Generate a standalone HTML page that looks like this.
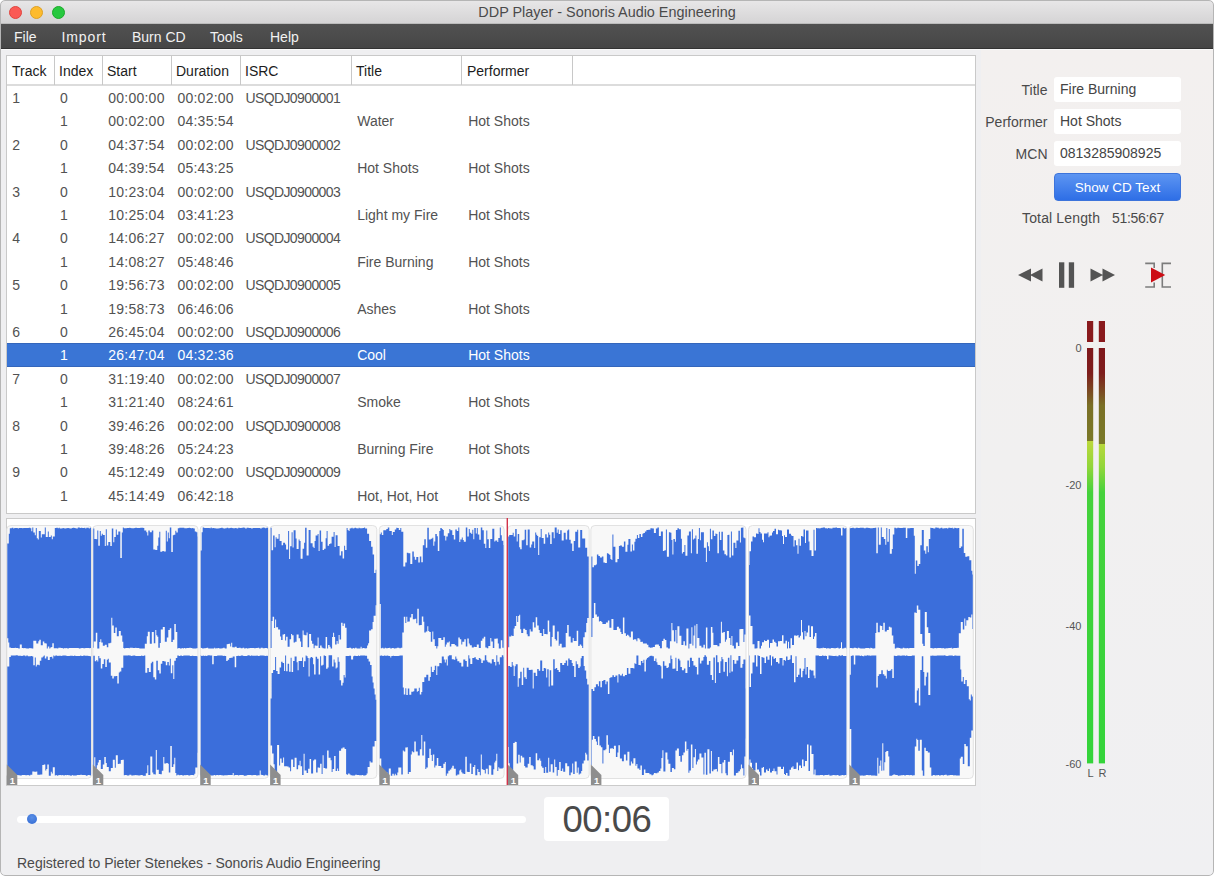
<!DOCTYPE html>
<html><head><meta charset="utf-8">
<style>
*{box-sizing:border-box;margin:0;padding:0}
html,body{width:1214px;height:876px;overflow:hidden;background:#fff;font-family:"Liberation Sans",sans-serif}
.win{position:absolute;left:0;top:0;width:1214px;height:876px;background:#efeff1;border-radius:5px;overflow:hidden}
.frame{position:absolute;left:0;top:0;width:1214px;height:876px;border:1px solid #b5b5b5;border-radius:5px;pointer-events:none}
.wave{position:absolute;left:6px;top:518px;width:970px;height:268px;background:#fff;border:1px solid #cbcbcb}
.abs{position:absolute;white-space:nowrap}
.titlebar{position:absolute;left:0;top:0;width:1214px;height:24px;background:linear-gradient(#e8e7e8,#d5d4d5);border-bottom:1px solid #bcbcbc}
.tl{position:absolute;top:5.5px;width:13px;height:13px;border-radius:50%}
.title{position:absolute;left:0;width:1214px;top:4px;text-align:center;font-size:14.4px;color:#4a4a4a}
.menubar{position:absolute;left:0;top:24px;width:1214px;height:25px;background:linear-gradient(#515151,#464646);border-bottom:1px solid #333}
.menu{position:absolute;top:4.5px;font-size:14px;color:#f2f2f2}
.table{position:absolute;left:6px;top:55px;width:970px;height:459px;background:#fff;border:1px solid #c9c9c9}
.hdr{position:absolute;left:0;top:0;width:968px;height:30px;border-bottom:2px solid #dcdcdc}
.hsep{position:absolute;top:0;width:1px;height:29px;background:#c8c8c8}
.ht{position:absolute;top:7px;font-size:14px;color:#1c1c1c}
.row{position:absolute;left:0;width:968px;height:23.4px}
.row span{position:absolute;top:4px;font-size:14px;color:#525252}
.row.sel{background:#3a75d5;box-shadow:inset 0 1px #3466bb,inset 0 -1px #3466bb}
.row.sel span{color:#fff}
.lbl{position:absolute;font-size:14px;color:#4a4a4a;text-align:right}
.fld{position:absolute;left:1054px;width:127px;height:25px;background:#fff;border-radius:3px}
.fld span{position:absolute;left:6px;top:4px;font-size:14px;color:#444}
.rpanel{position:absolute;left:981px;top:50px;width:233px;height:826px;background:linear-gradient(#f3f0ef,#f1f0f0 50%,#f0f0f2)}
.btn{position:absolute;left:1054px;top:173px;width:127px;height:28px;border-radius:4px;background:linear-gradient(#5d95f2,#2e6ee6);color:#fff;font-size:13.5px;text-align:center;line-height:28px;border:1px solid #3d74db}
</style></head><body>
<div class="win">
  <div class="titlebar">
    <div class="tl" style="left:9px;background:#fb5a55;border:1px solid #e0443e"></div>
    <div class="tl" style="left:30px;background:#fdbb2d;border:1px solid #dea123"></div>
    <div class="tl" style="left:51.5px;background:#27c83f;border:1px solid #1aab29"></div>
    <div class="title">DDP Player - Sonoris Audio Engineering</div>
  </div>
  <div class="menubar">
    <span class="menu" style="left:14px">File</span>
    <span class="menu" style="left:61.5px;letter-spacing:0.9px">Import</span>
    <span class="menu" style="left:132px">Burn CD</span>
    <span class="menu" style="left:210px">Tools</span>
    <span class="menu" style="left:270px">Help</span>
  </div>
  <div style="position:absolute;left:0;top:49px;width:1214px;height:1px;background:#f9f9f9"></div>
  <!--TABLE-->
<div class="table">
<div class="hdr">
<div class="hsep" style="left:47px"></div>
<div class="hsep" style="left:95px"></div>
<div class="hsep" style="left:164px"></div>
<div class="hsep" style="left:233px"></div>
<div class="hsep" style="left:344px"></div>
<div class="hsep" style="left:454px"></div>
<div class="hsep" style="left:565px"></div>
<span class="ht" style="left:5px">Track</span>
<span class="ht" style="left:52px">Index</span>
<span class="ht" style="left:100px">Start</span>
<span class="ht" style="left:169px">Duration</span>
<span class="ht" style="left:238px">ISRC</span>
<span class="ht" style="left:349px">Title</span>
<span class="ht" style="left:460px">Performer</span>
</div>
<div class="row" style="top:30.0px"><span style="left:5.3px">1</span><span style="left:53.0px">0</span><span style="left:101.2px;letter-spacing:0.25px">00:00:00</span><span style="left:170.4px;letter-spacing:0.25px">00:02:00</span><span style="left:238.4px;letter-spacing:-0.6px">USQDJ0900001</span></div>
<div class="row" style="top:53.4px"><span style="left:53.0px">1</span><span style="left:101.2px;letter-spacing:0.25px">00:02:00</span><span style="left:170.4px;letter-spacing:0.25px">04:35:54</span><span style="left:350.2px">Water</span><span style="left:461.2px">Hot Shots</span></div>
<div class="row" style="top:76.8px"><span style="left:5.3px">2</span><span style="left:53.0px">0</span><span style="left:101.2px;letter-spacing:0.25px">04:37:54</span><span style="left:170.4px;letter-spacing:0.25px">00:02:00</span><span style="left:238.4px;letter-spacing:-0.6px">USQDJ0900002</span></div>
<div class="row" style="top:100.2px"><span style="left:53.0px">1</span><span style="left:101.2px;letter-spacing:0.25px">04:39:54</span><span style="left:170.4px;letter-spacing:0.25px">05:43:25</span><span style="left:350.2px">Hot Shots</span><span style="left:461.2px">Hot Shots</span></div>
<div class="row" style="top:123.6px"><span style="left:5.3px">3</span><span style="left:53.0px">0</span><span style="left:101.2px;letter-spacing:0.25px">10:23:04</span><span style="left:170.4px;letter-spacing:0.25px">00:02:00</span><span style="left:238.4px;letter-spacing:-0.6px">USQDJ0900003</span></div>
<div class="row" style="top:147.0px"><span style="left:53.0px">1</span><span style="left:101.2px;letter-spacing:0.25px">10:25:04</span><span style="left:170.4px;letter-spacing:0.25px">03:41:23</span><span style="left:350.2px">Light my Fire</span><span style="left:461.2px">Hot Shots</span></div>
<div class="row" style="top:170.4px"><span style="left:5.3px">4</span><span style="left:53.0px">0</span><span style="left:101.2px;letter-spacing:0.25px">14:06:27</span><span style="left:170.4px;letter-spacing:0.25px">00:02:00</span><span style="left:238.4px;letter-spacing:-0.6px">USQDJ0900004</span></div>
<div class="row" style="top:193.8px"><span style="left:53.0px">1</span><span style="left:101.2px;letter-spacing:0.25px">14:08:27</span><span style="left:170.4px;letter-spacing:0.25px">05:48:46</span><span style="left:350.2px">Fire Burning</span><span style="left:461.2px">Hot Shots</span></div>
<div class="row" style="top:217.2px"><span style="left:5.3px">5</span><span style="left:53.0px">0</span><span style="left:101.2px;letter-spacing:0.25px">19:56:73</span><span style="left:170.4px;letter-spacing:0.25px">00:02:00</span><span style="left:238.4px;letter-spacing:-0.6px">USQDJ0900005</span></div>
<div class="row" style="top:240.6px"><span style="left:53.0px">1</span><span style="left:101.2px;letter-spacing:0.25px">19:58:73</span><span style="left:170.4px;letter-spacing:0.25px">06:46:06</span><span style="left:350.2px">Ashes</span><span style="left:461.2px">Hot Shots</span></div>
<div class="row" style="top:264.0px"><span style="left:5.3px">6</span><span style="left:53.0px">0</span><span style="left:101.2px;letter-spacing:0.25px">26:45:04</span><span style="left:170.4px;letter-spacing:0.25px">00:02:00</span><span style="left:238.4px;letter-spacing:-0.6px">USQDJ0900006</span></div>
<div class="row sel" style="top:287.4px"><span style="left:53.0px">1</span><span style="left:101.2px;letter-spacing:0.25px">26:47:04</span><span style="left:170.4px;letter-spacing:0.25px">04:32:36</span><span style="left:350.2px">Cool</span><span style="left:461.2px">Hot Shots</span></div>
<div class="row" style="top:310.8px"><span style="left:5.3px">7</span><span style="left:53.0px">0</span><span style="left:101.2px;letter-spacing:0.25px">31:19:40</span><span style="left:170.4px;letter-spacing:0.25px">00:02:00</span><span style="left:238.4px;letter-spacing:-0.6px">USQDJ0900007</span></div>
<div class="row" style="top:334.2px"><span style="left:53.0px">1</span><span style="left:101.2px;letter-spacing:0.25px">31:21:40</span><span style="left:170.4px;letter-spacing:0.25px">08:24:61</span><span style="left:350.2px">Smoke</span><span style="left:461.2px">Hot Shots</span></div>
<div class="row" style="top:357.6px"><span style="left:5.3px">8</span><span style="left:53.0px">0</span><span style="left:101.2px;letter-spacing:0.25px">39:46:26</span><span style="left:170.4px;letter-spacing:0.25px">00:02:00</span><span style="left:238.4px;letter-spacing:-0.6px">USQDJ0900008</span></div>
<div class="row" style="top:381.0px"><span style="left:53.0px">1</span><span style="left:101.2px;letter-spacing:0.25px">39:48:26</span><span style="left:170.4px;letter-spacing:0.25px">05:24:23</span><span style="left:350.2px">Burning Fire</span><span style="left:461.2px">Hot Shots</span></div>
<div class="row" style="top:404.4px"><span style="left:5.3px">9</span><span style="left:53.0px">0</span><span style="left:101.2px;letter-spacing:0.25px">45:12:49</span><span style="left:170.4px;letter-spacing:0.25px">00:02:00</span><span style="left:238.4px;letter-spacing:-0.6px">USQDJ0900009</span></div>
<div class="row" style="top:427.8px"><span style="left:53.0px">1</span><span style="left:101.2px;letter-spacing:0.25px">45:14:49</span><span style="left:170.4px;letter-spacing:0.25px">06:42:18</span><span style="left:350.2px">Hot, Hot, Hot</span><span style="left:461.2px">Hot Shots</span></div>
</div>
  <!--WAVE-->
<div class="wave"></div>
<svg class="abs" style="left:0;top:0" width="1212" height="876" viewBox="0 0 1212 876">
<rect x="6.8" y="525.5" width="84.7" height="253" rx="4" fill="#f8f8f8" stroke="#e2e2e2" stroke-width="1"/>
<rect x="92.8" y="525.5" width="105.2" height="253" rx="4" fill="#f8f8f8" stroke="#e2e2e2" stroke-width="1"/>
<rect x="200.2" y="525.5" width="68.3" height="253" rx="4" fill="#f8f8f8" stroke="#e2e2e2" stroke-width="1"/>
<rect x="270.1" y="525.5" width="106.7" height="253" rx="4" fill="#f8f8f8" stroke="#e2e2e2" stroke-width="1"/>
<rect x="379.3" y="525.5" width="124.8" height="253" rx="4" fill="#f8f8f8" stroke="#e2e2e2" stroke-width="1"/>
<rect x="507.7" y="525.5" width="81.5" height="253" rx="4" fill="#f8f8f8" stroke="#e2e2e2" stroke-width="1"/>
<rect x="590.9" y="525.5" width="155.1" height="253" rx="4" fill="#f8f8f8" stroke="#e2e2e2" stroke-width="1"/>
<rect x="748.5" y="525.5" width="98.4" height="253" rx="4" fill="#f8f8f8" stroke="#e2e2e2" stroke-width="1"/>
<rect x="849.3" y="525.5" width="124.0" height="253" rx="4" fill="#f8f8f8" stroke="#e2e2e2" stroke-width="1"/>
<path fill="#3b6edb" d="M7.3 543.4H7.8V543.4H8.3V543.4H8.8V533.7H9.3V533.7H9.8V528.3H10.3V528.3H10.8V528.3H11.3V528.3H11.8V527.8H12.3V527.8H12.8V527.8H13.3V528.4H13.8V528.4H14.3V528.0H14.8V528.0H15.3V528.0H15.8V527.9H16.3V527.9H16.8V527.9H17.3V527.9H17.8V528.5H18.3V528.5H18.8V528.0H19.3V528.0H19.8V528.0H20.3V528.1H20.8V528.1H21.3V528.1H21.8V528.1H22.3V528.3H22.8V528.3H23.3V527.9H23.8V527.9H24.3V527.9H24.8V528.1H25.3V528.1H25.8V527.9H26.3V527.9H26.8V528.0H27.3V528.0H27.8V528.0H28.3V528.0H28.8V527.8H29.3V527.8H29.8V527.8H30.3V528.2H30.8V528.2H31.3V531.2H31.8V531.2H32.3V527.6H32.8V527.6H33.3V532.5H33.8V532.5H34.3V532.5H34.8V535.3H35.3V535.3H35.8V528.0H36.3V528.0H36.8V538.2H37.3V538.2H37.8V539.5H38.3V539.5H38.8V531.1H39.3V531.1H39.8V531.1H40.3V531.1H40.8V537.4H41.3V537.4H41.8V534.3H42.3V534.3H42.8V534.3H43.3V534.3H43.8V534.3H44.3V534.3H44.8V527.6H45.3V527.6H45.8V537.1H46.3V537.1H46.8V537.1H47.3V537.1H47.8V531.6H48.3V531.6H48.8V537.0H49.3V537.0H49.8V537.0H50.3V537.0H50.8V535.4H51.3V535.4H51.8V539.2H52.3V539.2H52.8V536.4H53.3V536.4H53.8V536.4H54.3V536.4H54.8V528.1H55.3V528.1H55.8V528.1H56.3V527.8H56.8V527.8H57.3V527.8H57.8V528.3H58.3V528.3H58.8V527.8H59.3V527.8H59.8V528.4H60.3V528.4H60.8V528.4H61.3V528.4H61.8V528.3H62.3V528.3H62.8V528.3H63.3V528.0H63.8V528.0H64.3V528.4H64.8V528.4H65.3V528.4H65.8V528.3H66.3V528.3H66.8V528.3H67.3V528.1H67.8V528.1H68.3V528.1H68.8V528.2H69.3V528.2H69.8V528.4H70.3V528.4H70.8V528.4H71.3V528.4H71.8V528.0H72.3V528.0H72.8V527.8H73.3V527.8H73.8V527.8H74.3V528.1H74.8V528.1H75.3V528.3H75.8V528.3H76.3V528.4H76.8V528.4H77.3V528.4H77.8V527.6H78.3V527.6H78.8V527.6H79.3V527.6H79.8V528.0H80.3V528.0H80.8V527.7H81.3V527.7H81.8V527.7H82.3V527.9H82.8V527.9H83.3V528.0H83.8V528.0H84.3V527.8H84.8V527.8H85.3V528.4H85.8V528.4H86.3V527.7H86.8V527.7H87.3V527.8H87.8V527.8H88.3V527.8H88.8V528.4H89.3V528.4H89.8V527.7H90.3V527.7H90.8V527.7H91.0V648.1H90.8V648.1H90.3V648.2H89.8V648.2H89.3V647.9H88.8V647.9H88.3V647.9H87.8V647.9H87.3V647.9H86.8V647.9H86.3V647.9H85.8V647.9H85.3V648.3H84.8V648.3H84.3V648.3H83.8V648.3H83.3V648.1H82.8V648.1H82.3V648.1H81.8V648.1H81.3V648.2H80.8V648.2H80.3V648.5H79.8V648.5H79.3V648.5H78.8V648.1H78.3V648.1H77.8V648.1H77.3V648.1H76.8V648.0H76.3V648.0H75.8V648.1H75.3V648.1H74.8V648.1H74.3V648.1H73.8V648.1H73.3V648.1H72.8V648.0H72.3V648.0H71.8V648.0H71.3V648.0H70.8V648.0H70.3V648.0H69.8V647.9H69.3V647.9H68.8V648.6H68.3V648.6H67.8V648.6H67.3V647.9H66.8V647.9H66.3V648.3H65.8V648.3H65.3V648.0H64.8V648.0H64.3V648.4H63.8V648.4H63.3V648.4H62.8V648.0H62.3V648.0H61.8V648.0H61.3V648.0H60.8V647.8H60.3V647.8H59.8V647.8H59.3V647.8H58.8V647.8H58.3V648.5H57.8V648.5H57.3V648.3H56.8V648.3H56.3V648.3H55.8V648.2H55.3V648.2H54.8V648.2H54.3V648.2H53.8V643.2H53.3V643.2H52.8V643.2H52.3V647.1H51.8V647.1H51.3V647.6H50.8V647.6H50.3V648.4H49.8V648.4H49.3V646.4H48.8V646.4H48.3V646.4H47.8V648.5H47.3V648.5H46.8V643.6H46.3V643.6H45.8V643.3H45.3V643.3H44.8V643.3H44.3V641.6H43.8V641.6H43.3V641.6H42.8V645.2H42.3V645.2H41.8V645.2H41.3V645.2H40.8V639.8H40.3V639.8H39.8V639.8H39.3V641.3H38.8V641.3H38.3V643.4H37.8V643.4H37.3V643.4H36.8V643.4H36.3V640.7H35.8V640.7H35.3V640.7H34.8V640.8H34.3V640.8H33.8V640.8H33.3V648.4H32.8V648.4H32.3V648.4H31.8V648.3H31.3V648.3H30.8V648.3H30.3V648.1H29.8V648.1H29.3V648.5H28.8V648.5H28.3V648.5H27.8V648.5H27.3V648.5H26.8V648.5H26.3V648.3H25.8V648.3H25.3V648.0H24.8V648.0H24.3V648.3H23.8V648.3H23.3V647.9H22.8V647.9H22.3V647.9H21.8V644.4H21.3V644.4H20.8V644.4H20.3V644.4H19.8V648.4H19.3V648.4H18.8V648.4H18.3V647.9H17.8V647.9H17.3V647.9H16.8V648.0H16.3V648.0H15.8V647.8H15.3V647.8H14.8V648.1H14.3V648.1H13.8V648.1H13.3V648.1H12.8V648.0H12.3V648.0H11.8V648.0H11.3V648.0H10.8V647.5H10.3V647.5H9.8V647.5H9.3V642.4H8.8V642.4H8.3V638.3H7.8V638.3H7.3ZM7.3 775.6H7.8V775.6H8.3V775.6H8.8V770.3H9.3V770.3H9.8V775.3H10.3V775.3H10.8V775.3H11.3V775.3H11.8V774.9H12.3V774.9H12.8V774.9H13.3V774.9H13.8V774.9H14.3V775.6H14.8V775.6H15.3V775.6H15.8V775.0H16.3V775.0H16.8V775.1H17.3V775.1H17.8V775.1H18.3V775.3H18.8V775.3H19.3V775.3H19.8V775.4H20.3V775.4H20.8V775.4H21.3V775.4H21.8V775.0H22.3V775.0H22.8V775.0H23.3V775.1H23.8V775.1H24.3V775.1H24.8V775.1H25.3V775.2H25.8V775.2H26.3V775.2H26.8V775.2H27.3V774.9H27.8V774.9H28.3V774.9H28.8V775.4H29.3V775.4H29.8V775.4H30.3V774.8H30.8V774.8H31.3V774.8H31.8V774.8H32.3V771.4H32.8V771.4H33.3V771.4H33.8V771.4H34.3V771.7H34.8V771.7H35.3V771.7H35.8V771.7H36.3V771.4H36.8V771.4H37.3V774.8H37.8V774.8H38.3V774.8H38.8V774.7H39.3V774.7H39.8V774.7H40.3V774.5H40.8V774.5H41.3V774.5H41.8V774.5H42.3V765.1H42.8V765.1H43.3V765.1H43.8V764.5H44.3V764.5H44.8V764.5H45.3V770.6H45.8V770.6H46.3V768.9H46.8V768.9H47.3V764.5H47.8V764.5H48.3V764.5H48.8V775.7H49.3V775.7H49.8V775.7H50.3V775.7H50.8V771.7H51.3V771.7H51.8V773.6H52.3V773.6H52.8V767.2H53.3V767.2H53.8V767.2H54.3V767.2H54.8V775.6H55.3V775.6H55.8V775.0H56.3V775.0H56.8V775.7H57.3V775.7H57.8V775.3H58.3V775.3H58.8V775.3H59.3V774.9H59.8V774.9H60.3V774.9H60.8V775.2H61.3V775.2H61.8V775.2H62.3V775.0H62.8V775.0H63.3V775.6H63.8V775.6H64.3V775.6H64.8V775.1H65.3V775.1H65.8V775.3H66.3V775.3H66.8V775.1H67.3V775.1H67.8V775.1H68.3V775.3H68.8V775.3H69.3V775.3H69.8V775.3H70.3V775.7H70.8V775.7H71.3V775.7H71.8V775.0H72.3V775.0H72.8V775.5H73.3V775.5H73.8V775.5H74.3V775.6H74.8V775.6H75.3V775.6H75.8V775.5H76.3V775.5H76.8V774.9H77.3V774.9H77.8V774.9H78.3V774.9H78.8V774.9H79.3V774.9H79.8V774.9H80.3V774.8H80.8V774.8H81.3V774.8H81.8V775.1H82.3V775.1H82.8V775.1H83.3V775.1H83.8V775.0H84.3V775.0H84.8V775.0H85.3V775.0H85.8V775.7H86.3V775.7H86.8V775.5H87.3V775.5H87.8V774.9H88.3V774.9H88.8V775.0H89.3V775.0H89.8V775.5H90.3V775.5H90.8V774.9H91.0V656.2H90.8V656.2H90.3V656.2H89.8V656.0H89.3V656.0H88.8V656.0H88.3V655.8H87.8V655.8H87.3V655.8H86.8V655.8H86.3V655.8H85.8V655.8H85.3V655.8H84.8V655.4H84.3V655.4H83.8V655.4H83.3V655.9H82.8V655.9H82.3V655.9H81.8V655.9H81.3V655.6H80.8V655.6H80.3V655.9H79.8V655.9H79.3V655.9H78.8V656.1H78.3V656.1H77.8V656.1H77.3V656.1H76.8V656.1H76.3V656.1H75.8V656.1H75.3V655.5H74.8V655.5H74.3V656.1H73.8V656.1H73.3V656.1H72.8V655.8H72.3V655.8H71.8V655.8H71.3V655.8H70.8V655.8H70.3V655.8H69.8V655.9H69.3V655.9H68.8V655.9H68.3V655.9H67.8V655.9H67.3V655.9H66.8V655.8H66.3V655.8H65.8V655.4H65.3V655.4H64.8V655.4H64.3V655.5H63.8V655.5H63.3V655.5H62.8V655.5H62.3V655.9H61.8V655.9H61.3V655.8H60.8V655.8H60.3V655.8H59.8V655.7H59.3V655.7H58.8V655.7H58.3V656.0H57.8V656.0H57.3V655.6H56.8V655.6H56.3V655.6H55.8V655.6H55.3V656.2H54.8V656.2H54.3V655.4H53.8V655.4H53.3V658.4H52.8V658.4H52.3V656.8H51.8V656.8H51.3V657.1H50.8V657.1H50.3V657.1H49.8V660.0H49.3V660.0H48.8V660.0H48.3V660.0H47.8V656.6H47.3V656.6H46.8V656.6H46.3V658.5H45.8V658.5H45.3V658.5H44.8V655.6H44.3V655.6H43.8V656.6H43.3V656.6H42.8V657.5H42.3V657.5H41.8V657.5H41.3V660.8H40.8V660.8H40.3V660.8H39.8V665.3H39.3V665.3H38.8V664.8H38.3V664.8H37.8V664.8H37.3V664.8H36.8V666.5H36.3V666.5H35.8V657.6H35.3V657.6H34.8V665.2H34.3V665.2H33.8V665.2H33.3V656.6H32.8V656.6H32.3V656.1H31.8V656.1H31.3V656.1H30.8V656.2H30.3V656.2H29.8V656.2H29.3V656.2H28.8V656.2H28.3V656.2H27.8V655.6H27.3V655.6H26.8V655.6H26.3V656.2H25.8V656.2H25.3V655.6H24.8V655.6H24.3V655.6H23.8V655.6H23.3V655.6H22.8V655.9H22.3V655.9H21.8V655.9H21.3V655.8H20.8V655.8H20.3V655.8H19.8V655.8H19.3V655.7H18.8V655.7H18.3V655.7H17.8V655.3H17.3V655.3H16.8V655.3H16.3V655.3H15.8V655.4H15.3V655.4H14.8V655.4H14.3V655.6H13.8V655.6H13.3V655.6H12.8V655.5H12.3V655.5H11.8V655.5H11.3V655.5H10.8V657.1H10.3V657.1H9.8V657.1H9.3V666.4H8.8V666.4H8.3V666.4H7.8V666.4H7.3ZM93.3 528.4H93.8V528.4H94.3V538.9H94.8V538.9H95.3V538.9H95.8V538.9H96.3V539.3H96.8V539.3H97.3V530.4H97.8V530.4H98.3V545.7H98.8V545.7H99.3V545.7H99.8V530.9H100.3V530.9H100.8V535.8H101.3V535.8H101.8V533.8H102.3V533.8H102.8V535.0H103.3V535.0H103.8V535.0H104.3V535.0H104.8V545.9H105.3V545.9H105.8V529.3H106.3V529.3H106.8V545.5H107.3V545.5H107.8V545.5H108.3V541.9H108.8V541.9H109.3V541.9H109.8V541.9H110.3V546.1H110.8V546.1H111.3V546.1H111.8V528.6H112.3V528.6H112.8V528.6H113.3V542.2H113.8V542.2H114.3V537.0H114.8V537.0H115.3V537.0H115.8V529.6H116.3V529.6H116.8V534.8H117.3V534.8H117.8V534.8H118.3V531.5H118.8V531.5H119.3V531.5H119.8V531.5H120.3V558.0H120.8V558.0H121.3V558.0H121.8V532.4H122.3V532.4H122.8V527.6H123.3V527.6H123.8V528.2H124.3V528.2H124.8V528.2H125.3V528.2H125.8V528.2H126.3V528.2H126.8V528.1H127.3V528.1H127.8V528.1H128.3V527.9H128.8V527.9H129.3V527.7H129.8V527.7H130.3V528.0H130.8V528.0H131.3V528.2H131.8V528.2H132.3V528.2H132.8V528.3H133.3V528.3H133.8V528.3H134.3V528.0H134.8V528.0H135.3V527.7H135.8V527.7H136.3V527.7H136.8V527.9H137.3V527.9H137.8V527.9H138.3V527.9H138.8V528.1H139.3V528.1H139.8V528.1H140.3V527.7H140.8V527.7H141.3V527.7H141.8V527.7H142.3V527.8H142.8V527.8H143.3V528.1H143.8V528.1H144.3V530.4H144.8V530.4H145.3V530.4H145.8V530.4H146.3V532.3H146.8V532.3H147.3V535.5H147.8V535.5H148.3V530.4H148.8V530.4H149.3V530.4H149.8V532.2H150.3V532.2H150.8V532.2H151.3V532.2H151.8V530.4H152.3V530.4H152.8V530.4H153.3V549.5H153.8V549.5H154.3V549.5H154.8V549.5H155.3V550.0H155.8V550.0H156.3V550.0H156.8V550.0H157.3V545.8H157.8V545.8H158.3V537.6H158.8V537.6H159.3V531.7H159.8V531.7H160.3V551.7H160.8V551.7H161.3V551.7H161.8V551.7H162.3V551.1H162.8V551.1H163.3V551.1H163.8V551.6H164.3V551.6H164.8V551.6H165.3V551.6H165.8V530.8H166.3V530.8H166.8V541.6H167.3V541.6H167.8V532.6H168.3V532.6H168.8V538.3H169.3V538.3H169.8V527.6H170.3V527.6H170.8V527.6H171.3V551.9H171.8V551.9H172.3V551.9H172.8V535.3H173.3V535.3H173.8V534.8H174.3V534.8H174.8V534.8H175.3V530.7H175.8V530.7H176.3V532.6H176.8V532.6H177.3V532.6H177.8V528.3H178.3V528.3H178.8V528.3H179.3V527.8H179.8V527.8H180.3V527.7H180.8V527.7H181.3V527.7H181.8V527.7H182.3V527.7H182.8V527.7H183.3V527.8H183.8V527.8H184.3V528.3H184.8V528.3H185.3V528.2H185.8V528.2H186.3V528.2H186.8V528.2H187.3V528.1H187.8V528.1H188.3V528.1H188.8V527.8H189.3V527.8H189.8V527.9H190.3V527.9H190.8V528.3H191.3V528.3H191.8V528.3H192.3V528.0H192.8V528.0H193.3V528.5H193.8V528.5H194.3V528.5H194.8V531.5H195.3V531.5H195.8V531.5H196.3V532.3H196.8V532.3H197.3V536.6H197.5V648.1H197.3V648.3H196.8V648.3H196.3V648.6H195.8V648.6H195.3V648.5H194.8V648.5H194.3V648.4H193.8V648.4H193.3V648.4H192.8V648.4H192.3V647.9H191.8V647.9H191.3V647.9H190.8V647.8H190.3V647.8H189.8V647.8H189.3V648.1H188.8V648.1H188.3V648.1H187.8V648.0H187.3V648.0H186.8V648.0H186.3V648.5H185.8V648.5H185.3V648.0H184.8V648.0H184.3V648.0H183.8V648.6H183.3V648.6H182.8V647.9H182.3V647.9H181.8V648.5H181.3V648.5H180.8V648.5H180.3V648.5H179.8V647.9H179.3V647.9H178.8V647.9H178.3V648.5H177.8V648.5H177.3V631.9H176.8V631.9H176.3V631.9H175.8V624.0H175.3V624.0H174.8V624.0H174.3V639.7H173.8V639.7H173.3V639.7H172.8V642.1H172.3V642.1H171.8V642.1H171.3V628.2H170.8V628.2H170.3V628.2H169.8V630.0H169.3V630.0H168.8V630.0H168.3V637.4H167.8V637.4H167.3V637.4H166.8V641.7H166.3V641.7H165.8V641.7H165.3V641.7H164.8V626.9H164.3V626.9H163.8V626.9H163.3V626.9H162.8V629.5H162.3V629.5H161.8V629.5H161.3V629.5H160.8V643.1H160.3V643.1H159.8V647.8H159.3V647.8H158.8V647.8H158.3V636.7H157.8V636.7H157.3V635.3H156.8V635.3H156.3V630.0H155.8V630.0H155.3V643.3H154.8V643.3H154.3V643.3H153.8V631.9H153.3V631.9H152.8V631.9H152.3V631.9H151.8V643.7H151.3V643.7H150.8V643.7H150.3V643.7H149.8V631.8H149.3V631.8H148.8V631.8H148.3V631.8H147.8V636.2H147.3V636.2H146.8V643.8H146.3V643.8H145.8V643.8H145.3V643.8H144.8V648.4H144.3V648.4H143.8V648.5H143.3V648.5H142.8V648.5H142.3V648.4H141.8V648.4H141.3V648.4H140.8V648.5H140.3V648.5H139.8V648.5H139.3V648.1H138.8V648.1H138.3V648.1H137.8V648.1H137.3V648.1H136.8V648.1H136.3V647.7H135.8V647.7H135.3V647.9H134.8V647.9H134.3V647.9H133.8V648.1H133.3V648.1H132.8V647.8H132.3V647.8H131.8V647.8H131.3V647.8H130.8V647.8H130.3V647.8H129.8V648.3H129.3V648.3H128.8V648.0H128.3V648.0H127.8V648.0H127.3V648.1H126.8V648.1H126.3V647.9H125.8V647.9H125.3V648.4H124.8V648.4H124.3V648.0H123.8V648.0H123.3V641.7H122.8V641.7H122.3V635.5H121.8V635.5H121.3V635.5H120.8V631.1H120.3V631.1H119.8V631.1H119.3V631.1H118.8V636.2H118.3V636.2H117.8V636.2H117.3V636.2H116.8V627.4H116.3V627.4H115.8V627.4H115.3V633.0H114.8V633.0H114.3V633.0H113.8V625.4H113.3V625.4H112.8V625.4H112.3V617.8H111.8V617.8H111.3V642.7H110.8V642.7H110.3V643.3H109.8V643.3H109.3V643.3H108.8V643.3H108.3V647.3H107.8V647.3H107.3V647.3H106.8V644.7H106.3V644.7H105.8V644.7H105.3V644.7H104.8V645.8H104.3V645.8H103.8V645.8H103.3V645.8H102.8V642.5H102.3V642.5H101.8V642.5H101.3V639.2H100.8V639.2H100.3V642.1H99.8V642.1H99.3V648.4H98.8V648.4H98.3V648.4H97.8V648.4H97.3V632.8H96.8V632.8H96.3V632.8H95.8V641.4H95.3V641.4H94.8V641.4H94.3V641.4H93.8V647.7H93.3ZM93.3 766.8H93.8V766.8H94.3V757.2H94.8V757.2H95.3V768.6H95.8V768.6H96.3V768.6H96.8V765.2H97.3V765.2H97.8V762.4H98.3V762.4H98.8V760.0H99.3V760.0H99.8V760.1H100.3V760.1H100.8V769.0H101.3V769.0H101.8V769.0H102.3V769.0H102.8V764.4H103.3V764.4H103.8V764.4H104.3V756.9H104.8V756.9H105.3V756.9H105.8V763.1H106.3V763.1H106.8V767.1H107.3V767.1H107.8V767.1H108.3V767.1H108.8V771.3H109.3V771.3H109.8V771.3H110.3V771.3H110.8V767.9H111.3V767.9H111.8V767.9H112.3V767.9H112.8V759.8H113.3V759.8H113.8V759.8H114.3V759.8H114.8V767.8H115.3V767.8H115.8V755.2H116.3V755.2H116.8V755.2H117.3V755.2H117.8V763.9H118.3V763.9H118.8V763.7H119.3V763.7H119.8V763.7H120.3V763.7H120.8V760.1H121.3V760.1H121.8V760.1H122.3V759.8H122.8V759.8H123.3V759.8H123.8V775.3H124.3V775.3H124.8V774.9H125.3V774.9H125.8V774.9H126.3V774.9H126.8V775.4H127.3V775.4H127.8V775.4H128.3V775.4H128.8V775.4H129.3V774.8H129.8V774.8H130.3V774.8H130.8V774.8H131.3V775.5H131.8V775.5H132.3V775.5H132.8V775.5H133.3V775.2H133.8V775.2H134.3V775.2H134.8V775.2H135.3V775.0H135.8V775.0H136.3V775.2H136.8V775.2H137.3V775.2H137.8V775.2H138.3V775.5H138.8V775.5H139.3V775.5H139.8V775.2H140.3V775.2H140.8V774.9H141.3V774.9H141.8V774.9H142.3V774.9H142.8V775.7H143.3V775.7H143.8V775.7H144.3V775.7H144.8V775.7H145.3V775.7H145.8V773.2H146.3V773.2H146.8V773.2H147.3V765.3H147.8V765.3H148.3V775.1H148.8V775.1H149.3V775.1H149.8V775.1H150.3V756.5H150.8V756.5H151.3V756.5H151.8V756.5H152.3V772.4H152.8V772.4H153.3V774.2H153.8V774.2H154.3V774.2H154.8V774.5H155.3V774.5H155.8V750.1H156.3V750.1H156.8V769.7H157.3V769.7H157.8V769.7H158.3V769.7H158.8V774.0H159.3V774.0H159.8V774.0H160.3V774.3H160.8V774.3H161.3V774.3H161.8V770.7H162.3V770.7H162.8V770.7H163.3V757.0H163.8V757.0H164.3V763.4H164.8V763.4H165.3V763.4H165.8V763.4H166.3V763.1H166.8V763.1H167.3V763.1H167.8V763.7H168.3V763.7H168.8V772.6H169.3V772.6H169.8V772.6H170.3V746.0H170.8V746.0H171.3V746.0H171.8V766.9H172.3V766.9H172.8V766.9H173.3V764.2H173.8V764.2H174.3V757.7H174.8V757.7H175.3V773.1H175.8V773.1H176.3V775.5H176.8V775.5H177.3V774.8H177.8V774.8H178.3V774.8H178.8V775.2H179.3V775.2H179.8V775.2H180.3V775.1H180.8V775.1H181.3V775.1H181.8V775.1H182.3V775.4H182.8V775.4H183.3V775.4H183.8V775.4H184.3V775.0H184.8V775.0H185.3V775.3H185.8V775.3H186.3V775.1H186.8V775.1H187.3V775.1H187.8V775.1H188.3V775.4H188.8V775.4H189.3V775.4H189.8V775.4H190.3V775.0H190.8V775.0H191.3V775.0H191.8V774.9H192.3V774.9H192.8V774.9H193.3V775.3H193.8V775.3H194.3V773.7H194.8V773.7H195.3V767.4H195.8V767.4H196.3V767.4H196.8V767.4H197.3V752.8H197.5V656.2H197.3V656.2H196.8V656.0H196.3V656.0H195.8V656.0H195.3V656.0H194.8V656.0H194.3V656.0H193.8V656.0H193.3V655.7H192.8V655.7H192.3V655.7H191.8V655.9H191.3V655.9H190.8V655.9H190.3V655.9H189.8V655.4H189.3V655.4H188.8V655.5H188.3V655.5H187.8V655.5H187.3V655.5H186.8V655.5H186.3V655.6H185.8V655.6H185.3V655.6H184.8V655.5H184.3V655.5H183.8V655.5H183.3V656.0H182.8V656.0H182.3V656.0H181.8V655.5H181.3V655.5H180.8V655.5H180.3V656.0H179.8V656.0H179.3V656.0H178.8V655.4H178.3V655.4H177.8V655.4H177.3V657.9H176.8V657.9H176.3V657.9H175.8V660.7H175.3V660.7H174.8V660.7H174.3V679.1H173.8V679.1H173.3V665.3H172.8V665.3H172.3V673.2H171.8V673.2H171.3V673.2H170.8V658.8H170.3V658.8H169.8V665.6H169.3V665.6H168.8V662.0H168.3V662.0H167.8V662.0H167.3V665.2H166.8V665.2H166.3V665.2H165.8V661.5H165.3V661.5H164.8V661.5H164.3V661.0H163.8V661.0H163.3V661.0H162.8V661.0H162.3V663.7H161.8V663.7H161.3V663.7H160.8V673.6H160.3V673.6H159.8V673.6H159.3V670.3H158.8V670.3H158.3V670.3H157.8V660.7H157.3V660.7H156.8V660.7H156.3V679.4H155.8V679.4H155.3V679.4H154.8V677.2H154.3V677.2H153.8V677.2H153.3V661.7H152.8V661.7H152.3V661.7H151.8V663.3H151.3V663.3H150.8V671.9H150.3V671.9H149.8V671.9H149.3V671.9H148.8V668.1H148.3V668.1H147.8V668.1H147.3V672.8H146.8V672.8H146.3V672.8H145.8V672.8H145.3V655.5H144.8V655.5H144.3V655.5H143.8V656.1H143.3V656.1H142.8V656.1H142.3V655.6H141.8V655.6H141.3V655.9H140.8V655.9H140.3V655.9H139.8V656.0H139.3V656.0H138.8V656.1H138.3V656.1H137.8V656.1H137.3V656.0H136.8V656.0H136.3V656.0H135.8V656.0H135.3V655.4H134.8V655.4H134.3V655.6H133.8V655.6H133.3V655.7H132.8V655.7H132.3V655.7H131.8V655.9H131.3V655.9H130.8V655.6H130.3V655.6H129.8V655.6H129.3V655.3H128.8V655.3H128.3V655.5H127.8V655.5H127.3V655.5H126.8V655.6H126.3V655.6H125.8V655.6H125.3V655.6H124.8V655.6H124.3V655.6H123.8V655.6H123.3V667.8H122.8V667.8H122.3V667.8H121.8V667.8H121.3V671.5H120.8V671.5H120.3V671.5H119.8V672.4H119.3V672.4H118.8V683.5H118.3V683.5H117.8V683.5H117.3V675.9H116.8V675.9H116.3V675.9H115.8V676.3H115.3V676.3H114.8V676.3H114.3V676.3H113.8V678.6H113.3V678.6H112.8V678.6H112.3V675.8H111.8V675.8H111.3V675.8H110.8V662.5H110.3V662.5H109.8V662.5H109.3V662.5H108.8V658.7H108.3V658.7H107.8V659.8H107.3V659.8H106.8V667.0H106.3V667.0H105.8V667.0H105.3V659.3H104.8V659.3H104.3V659.3H103.8V664.0H103.3V664.0H102.8V664.0H102.3V668.6H101.8V668.6H101.3V668.6H100.8V658.2H100.3V658.2H99.8V658.2H99.3V655.9H98.8V655.9H98.3V661.4H97.8V661.4H97.3V659.9H96.8V659.9H96.3V661.2H95.8V661.2H95.3V661.2H94.8V655.8H94.3V655.8H93.8V655.8H93.3ZM200.7 550.6H201.2V550.6H201.7V532.2H202.2V532.2H202.7V527.6H203.2V527.6H203.7V527.6H204.2V528.1H204.7V528.1H205.2V528.1H205.7V528.1H206.2V528.1H206.7V528.1H207.2V528.1H207.7V528.1H208.2V527.9H208.7V527.9H209.2V527.9H209.7V528.3H210.2V528.3H210.7V527.6H211.2V527.6H211.7V528.3H212.2V528.3H212.7V528.0H213.2V528.0H213.7V528.0H214.2V528.2H214.7V528.2H215.2V528.2H215.7V528.5H216.2V528.5H216.7V528.4H217.2V528.4H217.7V528.4H218.2V528.4H218.7V528.3H219.2V528.3H219.7V528.3H220.2V528.1H220.7V528.1H221.2V527.7H221.7V527.7H222.2V527.7H222.7V528.3H223.2V528.3H223.7V528.5H224.2V528.5H224.7V528.5H225.2V528.2H225.7V528.2H226.2V528.2H226.7V527.8H227.2V527.8H227.7V527.8H228.2V528.2H228.7V528.2H229.2V528.2H229.7V528.0H230.2V528.0H230.7V527.8H231.2V527.8H231.7V528.0H232.2V528.0H232.7V528.2H233.2V528.2H233.7V528.2H234.2V528.2H234.7V528.2H235.2V528.1H235.7V528.1H236.2V528.2H236.7V528.2H237.2V528.5H237.7V528.5H238.2V527.8H238.7V527.8H239.2V527.8H239.7V528.1H240.2V528.1H240.7V528.1H241.2V528.1H241.7V527.8H242.2V527.8H242.7V527.8H243.2V527.6H243.7V527.6H244.2V527.8H244.7V527.8H245.2V528.4H245.7V528.4H246.2V528.4H246.7V527.7H247.2V527.7H247.7V527.7H248.2V527.7H248.7V527.9H249.2V527.9H249.7V527.9H250.2V528.0H250.7V528.0H251.2V528.4H251.7V528.4H252.2V528.4H252.7V528.1H253.2V528.1H253.7V528.1H254.2V528.1H254.7V528.1H255.2V528.1H255.7V528.1H256.2V528.0H256.7V528.0H257.2V528.0H257.7V528.0H258.2V528.0H258.7V528.0H259.2V528.0H259.7V528.0H260.2V528.4H260.7V528.4H261.2V528.4H261.7V527.8H262.2V527.8H262.7V527.8H263.2V527.6H263.7V527.6H264.2V527.8H264.7V527.8H265.2V528.3H265.7V528.3H266.2V527.8H266.7V527.8H267.2V527.8H267.7V527.8H268.0V648.6H267.7V648.6H267.2V648.1H266.7V648.1H266.2V648.0H265.7V648.0H265.2V648.0H264.7V648.3H264.2V648.3H263.7V648.3H263.2V648.3H262.7V647.7H262.2V647.7H261.7V647.7H261.2V647.7H260.7V648.5H260.2V648.5H259.7V648.5H259.2V647.8H258.7V647.8H258.2V647.8H257.7V648.1H257.2V648.1H256.7V648.1H256.2V648.1H255.7V648.2H255.2V648.2H254.7V648.2H254.2V647.9H253.7V647.9H253.2V648.0H252.7V648.0H252.2V648.0H251.7V648.0H251.2V647.9H250.7V647.9H250.2V647.9H249.7V648.3H249.2V648.3H248.7V648.3H248.2V648.4H247.7V648.4H247.2V648.4H246.7V647.9H246.2V647.9H245.7V648.6H245.2V648.6H244.7V648.6H244.2V647.8H243.7V647.8H243.2V647.8H242.7V648.3H242.2V648.3H241.7V648.3H241.2V648.3H240.7V647.8H240.2V647.8H239.7V647.8H239.2V647.8H238.7V648.1H238.2V648.1H237.7V648.1H237.2V648.1H236.7V646.7H236.2V646.7H235.7V646.7H235.2V646.7H234.7V647.5H234.2V647.5H233.7V647.3H233.2V647.3H232.7V647.3H232.2V642.7H231.7V642.7H231.2V646.6H230.7V646.6H230.2V643.7H229.7V643.7H229.2V643.7H228.7V644.0H228.2V644.0H227.7V644.3H227.2V644.3H226.7V648.5H226.2V648.5H225.7V648.5H225.2V648.5H224.7V647.7H224.2V647.7H223.7V647.7H223.2V648.2H222.7V648.2H222.2V648.2H221.7V648.5H221.2V648.5H220.7V648.6H220.2V648.6H219.7V648.6H219.2V648.1H218.7V648.1H218.2V648.3H217.7V648.3H217.2V648.3H216.7V648.3H216.2V648.4H215.7V648.4H215.2V647.7H214.7V647.7H214.2V648.4H213.7V648.4H213.2V648.4H212.7V648.6H212.2V648.6H211.7V648.5H211.2V648.5H210.7V648.5H210.2V648.5H209.7V648.5H209.2V648.5H208.7V648.5H208.2V647.8H207.7V647.8H207.2V647.8H206.7V648.1H206.2V648.1H205.7V648.2H205.2V648.2H204.7V648.2H204.2V648.2H203.7V648.5H203.2V648.5H202.7V648.5H202.2V647.9H201.7V647.9H201.2V647.7H200.7ZM200.7 775.2H201.2V775.2H201.7V775.2H202.2V775.2H202.7V775.4H203.2V775.4H203.7V775.7H204.2V775.7H204.7V775.3H205.2V775.3H205.7V775.3H206.2V775.1H206.7V775.1H207.2V775.1H207.7V774.9H208.2V774.9H208.7V774.9H209.2V774.9H209.7V774.9H210.2V774.9H210.7V775.5H211.2V775.5H211.7V775.5H212.2V775.5H212.7V775.5H213.2V775.5H213.7V774.9H214.2V774.9H214.7V774.9H215.2V775.6H215.7V775.6H216.2V774.9H216.7V774.9H217.2V774.9H217.7V774.9H218.2V775.3H218.7V775.3H219.2V775.1H219.7V775.1H220.2V774.9H220.7V774.9H221.2V775.3H221.7V775.3H222.2V775.3H222.7V775.5H223.2V775.5H223.7V775.5H224.2V775.2H224.7V775.2H225.2V775.2H225.7V775.2H226.2V775.2H226.7V775.2H227.2V775.2H227.7V774.9H228.2V774.9H228.7V774.9H229.2V774.9H229.7V774.9H230.2V774.9H230.7V774.9H231.2V774.9H231.7V775.0H232.2V775.0H232.7V773.1H233.2V773.1H233.7V775.5H234.2V775.5H234.7V775.1H235.2V775.1H235.7V775.1H236.2V774.9H236.7V774.9H237.2V774.9H237.7V774.9H238.2V775.4H238.7V775.4H239.2V775.1H239.7V775.1H240.2V775.0H240.7V775.0H241.2V775.0H241.7V775.1H242.2V775.1H242.7V775.1H243.2V775.1H243.7V775.7H244.2V775.7H244.7V775.7H245.2V775.7H245.7V775.6H246.2V775.6H246.7V775.6H247.2V775.0H247.7V775.0H248.2V775.1H248.7V775.1H249.2V775.1H249.7V775.1H250.2V775.1H250.7V775.1H251.2V775.2H251.7V775.2H252.2V775.2H252.7V775.2H253.2V774.9H253.7V774.9H254.2V774.9H254.7V774.9H255.2V775.1H255.7V775.1H256.2V775.4H256.7V775.4H257.2V775.4H257.7V775.2H258.2V775.2H258.7V775.2H259.2V775.2H259.7V770.4H260.2V770.4H260.7V774.8H261.2V774.8H261.7V775.1H262.2V775.1H262.7V775.1H263.2V775.6H263.7V775.6H264.2V775.6H264.7V775.6H265.2V774.8H265.7V774.8H266.2V775.3H266.7V775.3H267.2V775.6H267.7V775.6H268.0V655.9H267.7V655.7H267.2V655.7H266.7V655.7H266.2V656.1H265.7V656.1H265.2V655.7H264.7V655.7H264.2V655.7H263.7V655.6H263.2V655.6H262.7V655.6H262.2V655.5H261.7V655.5H261.2V655.5H260.7V655.5H260.2V655.5H259.7V656.0H259.2V656.0H258.7V656.0H258.2V656.0H257.7V655.5H257.2V655.5H256.7V655.8H256.2V655.8H255.7V655.8H255.2V655.7H254.7V655.7H254.2V655.7H253.7V655.8H253.2V655.8H252.7V655.8H252.2V655.5H251.7V655.5H251.2V655.5H250.7V655.9H250.2V655.9H249.7V655.3H249.2V655.3H248.7V655.3H248.2V655.4H247.7V655.4H247.2V655.9H246.7V655.9H246.2V655.9H245.7V656.0H245.2V656.0H244.7V656.0H244.2V655.9H243.7V655.9H243.2V655.6H242.7V655.6H242.2V655.6H241.7V655.6H241.2V655.6H240.7V655.9H240.2V655.9H239.7V655.9H239.2V655.8H238.7V655.8H238.2V655.8H237.7V655.9H237.2V655.9H236.7V655.9H236.2V667.3H235.7V667.3H235.2V667.3H234.7V656.6H234.2V656.6H233.7V656.6H233.2V656.6H232.7V657.8H232.2V657.8H231.7V657.8H231.2V657.8H230.7V657.9H230.2V657.9H229.7V657.9H229.2V659.7H228.7V659.7H228.2V659.7H227.7V660.9H227.2V660.9H226.7V660.9H226.2V656.1H225.7V656.1H225.2V656.1H224.7V655.8H224.2V655.8H223.7V656.1H223.2V656.1H222.7V655.6H222.2V655.6H221.7V655.6H221.2V655.6H220.7V655.6H220.2V655.6H219.7V655.4H219.2V655.4H218.7V655.4H218.2V655.5H217.7V655.5H217.2V655.9H216.7V655.9H216.2V655.9H215.7V656.0H215.2V656.0H214.7V655.9H214.2V655.9H213.7V664.2H213.2V664.2H212.7V664.2H212.2V655.6H211.7V655.6H211.2V655.6H210.7V655.6H210.2V655.6H209.7V655.3H209.2V655.3H208.7V655.3H208.2V655.5H207.7V655.5H207.2V655.9H206.7V655.9H206.2V655.8H205.7V655.8H205.2V655.8H204.7V655.9H204.2V655.9H203.7V655.6H203.2V655.6H202.7V656.0H202.2V656.0H201.7V656.0H201.2V655.3H200.7ZM270.6 527.7H271.1V527.7H271.6V550.3H272.1V550.3H272.6V550.3H273.1V535.6H273.6V535.6H274.1V535.6H274.6V547.2H275.1V547.2H275.6V537.3H276.1V537.3H276.6V538.8H277.1V538.8H277.6V538.8H278.1V538.8H278.6V534.1H279.1V534.1H279.6V541.0H280.1V541.0H280.6V541.0H281.1V541.0H281.6V545.3H282.1V545.3H282.6V545.3H283.1V542.8H283.6V542.8H284.1V542.8H284.6V542.8H285.1V544.4H285.6V544.4H286.1V549.4H286.6V549.4H287.1V549.4H287.6V549.4H288.1V531.1H288.6V531.1H289.1V559.0H289.6V559.0H290.1V546.2H290.6V546.2H291.1V546.2H291.6V532.3H292.1V532.3H292.6V547.5H293.1V547.5H293.6V530.3H294.1V530.3H294.6V530.3H295.1V530.3H295.6V538.6H296.1V538.6H296.6V549.0H297.1V549.0H297.6V549.0H298.1V549.0H298.6V539.4H299.1V539.4H299.6V541.1H300.1V541.1H300.6V558.8H301.1V558.8H301.6V558.8H302.1V558.8H302.6V548.8H303.1V548.8H303.6V548.8H304.1V542.8H304.6V542.8H305.1V527.8H305.6V527.8H306.1V527.8H306.6V555.5H307.1V555.5H307.6V555.5H308.1V555.5H308.6V530.1H309.1V530.1H309.6V530.1H310.1V530.1H310.6V543.2H311.1V543.2H311.6V543.2H312.1V543.2H312.6V546.8H313.1V546.8H313.6V548.0H314.1V548.0H314.6V540.9H315.1V540.9H315.6V535.6H316.1V535.6H316.6V535.6H317.1V535.6H317.6V534.1H318.1V534.1H318.6V551.1H319.1V551.1H319.6V530.4H320.1V530.4H320.6V530.4H321.1V541.8H321.6V541.8H322.1V541.8H322.6V549.9H323.1V549.9H323.6V549.9H324.1V548.7H324.6V548.7H325.1V548.7H325.6V538.3H326.1V538.3H326.6V531.1H327.1V531.1H327.6V545.7H328.1V545.7H328.6V545.7H329.1V544.0H329.6V544.0H330.1V543.5H330.6V543.5H331.1V543.5H331.6V536.7H332.1V536.7H332.6V536.7H333.1V536.7H333.6V531.9H334.1V531.9H334.6V547.1H335.1V547.1H335.6V535.2H336.1V535.2H336.6V535.2H337.1V535.2H337.6V546.1H338.1V546.1H338.6V546.1H339.1V546.1H339.6V555.6H340.1V555.6H340.6V555.6H341.1V551.2H341.6V551.2H342.1V551.2H342.6V558.5H343.1V558.5H343.6V558.5H344.1V545.8H344.6V545.8H345.1V549.9H345.6V549.9H346.1V549.9H346.6V528.1H347.1V528.1H347.6V530.0H348.1V530.0H348.6V530.9H349.1V530.9H349.6V528.5H350.1V528.5H350.6V528.3H351.1V528.3H351.6V527.7H352.1V527.7H352.6V528.4H353.1V528.4H353.6V528.3H354.1V528.3H354.6V527.7H355.1V527.7H355.6V527.7H356.1V528.2H356.6V528.2H357.1V528.2H357.6V528.4H358.1V528.4H358.6V527.8H359.1V527.8H359.6V528.2H360.1V528.2H360.6V528.3H361.1V528.3H361.6V528.3H362.1V528.3H362.6V528.1H363.1V528.1H363.6V528.1H364.1V527.6H364.6V527.6H365.1V528.5H365.6V528.5H366.1V528.5H366.6V528.5H367.1V533.7H367.6V533.7H368.1V533.7H368.6V533.7H369.1V541.0H369.6V541.0H370.1V541.0H370.6V541.0H371.1V546.7H371.6V546.7H372.1V546.7H372.6V554.6H373.1V554.6H373.6V554.6H374.1V572.9H374.6V572.9H375.1V572.9H375.6V569.8H376.1V569.8H376.3V605.3H376.1V605.3H375.6V615.8H375.1V615.8H374.6V615.8H374.1V615.8H373.6V621.9H373.1V621.9H372.6V629.3H372.1V629.3H371.6V629.3H371.1V630.6H370.6V630.6H370.1V630.6H369.6V630.6H369.1V643.2H368.6V643.2H368.1V645.4H367.6V645.4H367.1V648.3H366.6V648.3H366.1V648.3H365.6V648.4H365.1V648.4H364.6V647.9H364.1V647.9H363.6V647.9H363.1V647.9H362.6V648.4H362.1V648.4H361.6V646.7H361.1V646.7H360.6V648.5H360.1V648.5H359.6V648.5H359.1V648.5H358.6V648.4H358.1V648.4H357.6V648.4H357.1V648.4H356.6V647.8H356.1V647.8H355.6V647.8H355.1V648.4H354.6V648.4H354.1V648.1H353.6V648.1H353.1V648.5H352.6V648.5H352.1V648.5H351.6V648.5H351.1V647.7H350.6V647.7H350.1V647.7H349.6V647.7H349.1V648.1H348.6V648.1H348.1V648.1H347.6V647.9H347.1V647.9H346.6V627.8H346.1V627.8H345.6V627.8H345.1V623.5H344.6V623.5H344.1V623.5H343.6V626.0H343.1V626.0H342.6V622.8H342.1V622.8H341.6V622.8H341.1V639.4H340.6V639.4H340.1V639.4H339.6V635.1H339.1V635.1H338.6V643.8H338.1V643.8H337.6V641.1H337.1V641.1H336.6V644.4H336.1V644.4H335.6V644.4H335.1V637.1H334.6V637.1H334.1V632.7H333.6V632.7H333.1V636.9H332.6V636.9H332.1V648.6H331.6V648.6H331.1V648.6H330.6V646.8H330.1V646.8H329.6V645.1H329.1V645.1H328.6V645.1H328.1V648.4H327.6V648.4H327.1V637.1H326.6V637.1H326.1V637.1H325.6V648.4H325.1V648.4H324.6V648.4H324.1V648.3H323.6V648.3H323.1V648.3H322.6V647.6H322.1V647.6H321.6V645.6H321.1V645.6H320.6V645.6H320.1V648.0H319.6V648.0H319.1V648.0H318.6V637.6H318.1V637.6H317.6V645.7H317.1V645.7H316.6V645.7H316.1V645.6H315.6V645.6H315.1V645.6H314.6V648.3H314.1V648.3H313.6V643.8H313.1V643.8H312.6V643.8H312.1V640.7H311.6V640.7H311.1V633.9H310.6V633.9H310.1V633.9H309.6V633.9H309.1V647.2H308.6V647.2H308.1V647.2H307.6V632.4H307.1V632.4H306.6V635.3H306.1V635.3H305.6V635.3H305.1V635.3H304.6V634.8H304.1V634.8H303.6V630.4H303.1V630.4H302.6V646.9H302.1V646.9H301.6V646.9H301.1V641.5H300.6V641.5H300.1V638.3H299.6V638.3H299.1V638.3H298.6V634.4H298.1V634.4H297.6V634.4H297.1V634.4H296.6V641.7H296.1V641.7H295.6V641.7H295.1V642.5H294.6V642.5H294.1V642.5H293.6V635.3H293.1V635.3H292.6V635.3H292.1V633.9H291.6V633.9H291.1V639.3H290.6V639.3H290.1V639.3H289.6V646.8H289.1V646.8H288.6V646.8H288.1V646.8H287.6V636.8H287.1V636.8H286.6V636.8H286.1V640.4H285.6V640.4H285.1V633.9H284.6V633.9H284.1V634.4H283.6V634.4H283.1V634.4H282.6V639.9H282.1V639.9H281.6V639.9H281.1V636.6H280.6V636.6H280.1V629.4H279.6V629.4H279.1V629.4H278.6V629.4H278.1V627.2H277.6V627.2H277.1V627.2H276.6V627.2H276.1V619.4H275.6V619.4H275.1V627.9H274.6V627.9H274.1V616.8H273.6V616.8H273.1V616.8H272.6V620.9H272.1V620.9H271.6V648.0H271.1V648.0H270.6ZM270.6 745.4H271.1V745.4H271.6V745.4H272.1V753.6H272.6V753.6H273.1V753.6H273.6V764.3H274.1V764.3H274.6V772.5H275.1V772.5H275.6V772.5H276.1V773.1H276.6V773.1H277.1V745.0H277.6V745.0H278.1V745.0H278.6V745.0H279.1V765.4H279.6V765.4H280.1V758.6H280.6V758.6H281.1V758.6H281.6V762.8H282.1V762.8H282.6V762.8H283.1V757.4H283.6V757.4H284.1V766.3H284.6V766.3H285.1V766.3H285.6V766.3H286.1V766.3H286.6V766.3H287.1V766.4H287.6V766.4H288.1V766.4H288.6V767.4H289.1V767.4H289.6V767.4H290.1V771.3H290.6V771.3H291.1V759.6H291.6V759.6H292.1V759.6H292.6V759.6H293.1V767.0H293.6V767.0H294.1V767.0H294.6V757.7H295.1V757.7H295.6V757.7H296.1V757.7H296.6V769.2H297.1V769.2H297.6V769.2H298.1V765.2H298.6V765.2H299.1V765.2H299.6V760.7H300.1V760.7H300.6V766.2H301.1V766.2H301.6V766.2H302.1V775.1H302.6V775.1H303.1V775.1H303.6V753.8H304.1V753.8H304.6V770.4H305.1V770.4H305.6V770.4H306.1V770.4H306.6V772.9H307.1V772.9H307.6V772.9H308.1V768.8H308.6V768.8H309.1V768.8H309.6V758.9H310.1V758.9H310.6V758.9H311.1V773.6H311.6V773.6H312.1V773.6H312.6V773.6H313.1V760.4H313.6V760.4H314.1V759.4H314.6V759.4H315.1V759.4H315.6V759.4H316.1V772.5H316.6V772.5H317.1V772.5H317.6V767.4H318.1V767.4H318.6V767.4H319.1V767.7H319.6V767.7H320.1V763.7H320.6V763.7H321.1V763.7H321.6V774.1H322.1V774.1H322.6V755.3H323.1V755.3H323.6V768.1H324.1V768.1H324.6V768.1H325.1V768.4H325.6V768.4H326.1V768.4H326.6V768.4H327.1V750.6H327.6V750.6H328.1V750.6H328.6V757.8H329.1V757.8H329.6V757.8H330.1V757.8H330.6V760.2H331.1V760.2H331.6V771.9H332.1V771.9H332.6V769.1H333.1V769.1H333.6V769.1H334.1V756.1H334.6V756.1H335.1V756.1H335.6V771.1H336.1V771.1H336.6V771.1H337.1V768.6H337.6V768.6H338.1V770.9H338.6V770.9H339.1V750.7H339.6V750.7H340.1V750.7H340.6V750.7H341.1V748.4H341.6V748.4H342.1V748.4H342.6V747.5H343.1V747.5H343.6V747.5H344.1V747.5H344.6V749.0H345.1V749.0H345.6V749.0H346.1V774.3H346.6V774.3H347.1V774.8H347.6V774.8H348.1V773.4H348.6V773.4H349.1V773.4H349.6V774.4H350.1V774.4H350.6V775.2H351.1V775.2H351.6V775.2H352.1V775.4H352.6V775.4H353.1V775.5H353.6V775.5H354.1V775.5H354.6V775.5H355.1V774.8H355.6V774.8H356.1V774.8H356.6V774.8H357.1V775.1H357.6V775.1H358.1V775.1H358.6V775.1H359.1V775.3H359.6V775.3H360.1V775.2H360.6V775.2H361.1V775.2H361.6V775.2H362.1V775.0H362.6V775.0H363.1V775.4H363.6V775.4H364.1V775.4H364.6V775.5H365.1V775.5H365.6V775.1H366.1V775.1H366.6V773.4H367.1V773.4H367.6V767.1H368.1V767.1H368.6V767.1H369.1V767.1H369.6V761.2H370.1V761.2H370.6V762.4H371.1V762.4H371.6V762.4H372.1V762.4H372.6V746.4H373.1V746.4H373.6V746.4H374.1V746.4H374.6V741.0H375.1V741.0H375.6V741.0H376.1V741.0H376.3V699.7H376.1V699.7H375.6V694.4H375.1V694.4H374.6V688.6H374.1V688.6H373.6V682.4H373.1V682.4H372.6V676.6H372.1V676.6H371.6V665.1H371.1V665.1H370.6V665.1H370.1V661.5H369.6V661.5H369.1V661.5H368.6V658.8H368.1V658.8H367.6V658.8H367.1V655.7H366.6V655.7H366.1V655.7H365.6V655.7H365.1V655.5H364.6V655.5H364.1V655.5H363.6V655.5H363.1V655.5H362.6V655.6H362.1V655.6H361.6V655.6H361.1V655.5H360.6V655.5H360.1V656.0H359.6V656.0H359.1V655.4H358.6V655.4H358.1V656.1H357.6V656.1H357.1V656.1H356.6V655.9H356.1V655.9H355.6V655.8H355.1V655.8H354.6V655.8H354.1V656.2H353.6V656.2H353.1V659.5H352.6V659.5H352.1V659.5H351.6V659.5H351.1V655.8H350.6V655.8H350.1V655.8H349.6V655.8H349.1V656.1H348.6V656.1H348.1V656.1H347.6V656.1H347.1V656.1H346.6V656.0H346.1V656.0H345.6V677.5H345.1V677.5H344.6V674.9H344.1V674.9H343.6V682.8H343.1V682.8H342.6V685.6H342.1V685.6H341.6V685.6H341.1V680.2H340.6V680.2H340.1V680.2H339.6V661.7H339.1V661.7H338.6V657.2H338.1V657.2H337.6V667.4H337.1V667.4H336.6V668.4H336.1V668.4H335.6V662.4H335.1V662.4H334.6V659.6H334.1V659.6H333.6V666.5H333.1V666.5H332.6V666.5H332.1V655.3H331.6V655.3H331.1V655.3H330.6V655.3H330.1V655.3H329.6V655.3H329.1V655.3H328.6V667.6H328.1V667.6H327.6V668.8H327.1V668.8H326.6V668.8H326.1V656.1H325.6V656.1H325.1V655.5H324.6V655.5H324.1V655.5H323.6V664.8H323.1V664.8H322.6V665.4H322.1V665.4H321.6V665.4H321.1V656.3H320.6V656.3H320.1V674.6H319.6V674.6H319.1V674.6H318.6V658.8H318.1V658.8H317.6V658.8H317.1V656.8H316.6V656.8H316.1V656.8H315.6V674.4H315.1V674.4H314.6V674.4H314.1V664.3H313.6V664.3H313.1V657.8H312.6V657.8H312.1V656.9H311.6V656.9H311.1V656.9H310.6V658.2H310.1V658.2H309.6V676.6H309.1V676.6H308.6V658.1H308.1V658.1H307.6V656.2H307.1V656.2H306.6V655.6H306.1V655.6H305.6V661.2H305.1V661.2H304.6V661.2H304.1V666.9H303.6V666.9H303.1V657.4H302.6V657.4H302.1V661.0H301.6V661.0H301.1V661.0H300.6V661.0H300.1V660.9H299.6V660.9H299.1V660.9H298.6V670.2H298.1V670.2H297.6V662.2H297.1V662.2H296.6V656.4H296.1V656.4H295.6V656.4H295.1V656.4H294.6V660.9H294.1V660.9H293.6V660.9H293.1V672.1H292.6V672.1H292.1V672.1H291.6V657.7H291.1V657.7H290.6V671.7H290.1V671.7H289.6V671.7H289.1V663.7H288.6V663.7H288.1V663.7H287.6V671.3H287.1V671.3H286.6V671.3H286.1V655.5H285.6V655.5H285.1V671.1H284.6V671.1H284.1V662.9H283.6V662.9H283.1V662.9H282.6V661.7H282.1V661.7H281.6V661.7H281.1V667.4H280.6V667.4H280.1V667.4H279.6V674.0H279.1V674.0H278.6V674.0H278.1V674.0H277.6V670.9H277.1V670.9H276.6V670.9H276.1V657.1H275.6V657.1H275.1V669.9H274.6V669.9H274.1V669.9H273.6V669.9H273.1V673.1H272.6V673.1H272.1V673.1H271.6V698.4H271.1V698.4H270.6ZM379.8 534.3H380.3V534.3H380.8V532.5H381.3V532.5H381.8V535.1H382.3V535.1H382.8V535.1H383.3V530.3H383.8V530.3H384.3V530.3H384.8V530.3H385.3V530.3H385.8V530.3H386.3V529.1H386.8V529.1H387.3V529.1H387.8V527.6H388.3V527.6H388.8V527.6H389.3V531.0H389.8V531.0H390.3V531.0H390.8V531.1H391.3V531.1H391.8V534.9H392.3V534.9H392.8V532.1H393.3V532.1H393.8V532.1H394.3V532.1H394.8V529.6H395.3V529.6H395.8V529.6H396.3V527.8H396.8V527.8H397.3V528.1H397.8V528.1H398.3V528.1H398.8V530.0H399.3V530.0H399.8V530.0H400.3V528.0H400.8V528.0H401.3V531.7H401.8V531.7H402.3V531.7H402.8V531.7H403.3V566.6H403.8V566.6H404.3V566.6H404.8V566.6H405.3V562.5H405.8V562.5H406.3V562.5H406.8V552.8H407.3V552.8H407.8V552.8H408.3V553.2H408.8V553.2H409.3V553.2H409.8V553.2H410.3V564.1H410.8V564.1H411.3V564.1H411.8V564.1H412.3V551.5H412.8V551.5H413.3V551.5H413.8V556.7H414.3V556.7H414.8V559.8H415.3V559.8H415.8V559.8H416.3V557.0H416.8V557.0H417.3V557.0H417.8V557.0H418.3V562.6H418.8V562.6H419.3V562.6H419.8V556.6H420.3V556.6H420.8V556.6H421.3V562.3H421.8V562.3H422.3V562.3H422.8V545.3H423.3V545.3H423.8V545.3H424.3V539.2H424.8V539.2H425.3V539.2H425.8V547.7H426.3V547.7H426.8V547.7H427.3V527.7H427.8V527.7H428.3V527.7H428.8V539.6H429.3V539.6H429.8V539.6H430.3V539.6H430.8V538.7H431.3V538.7H431.8V538.7H432.3V537.7H432.8V537.7H433.3V545.7H433.8V545.7H434.3V541.4H434.8V541.4H435.3V534.0H435.8V534.0H436.3V534.0H436.8V536.2H437.3V536.2H437.8V550.9H438.3V550.9H438.8V550.9H439.3V530.9H439.8V530.9H440.3V528.0H440.8V528.0H441.3V528.0H441.8V529.1H442.3V529.1H442.8V530.1H443.3V530.1H443.8V535.8H444.3V535.8H444.8V535.8H445.3V540.5H445.8V540.5H446.3V536.6H446.8V536.6H447.3V536.6H447.8V533.3H448.3V533.3H448.8V533.3H449.3V529.0H449.8V529.0H450.3V530.3H450.8V530.3H451.3V530.3H451.8V530.3H452.3V535.0H452.8V535.0H453.3V535.0H453.8V539.6H454.3V539.6H454.8V539.6H455.3V529.4H455.8V529.4H456.3V529.4H456.8V531.1H457.3V531.1H457.8V531.1H458.3V527.6H458.8V527.6H459.3V542.1H459.8V542.1H460.3V539.6H460.8V539.6H461.3V539.6H461.8V537.4H462.3V537.4H462.8V539.9H463.3V539.9H463.8V541.8H464.3V541.8H464.8V541.8H465.3V541.8H465.8V527.6H466.3V527.6H466.8V527.6H467.3V536.6H467.8V536.6H468.3V536.6H468.8V528.9H469.3V528.9H469.8V532.8H470.3V532.8H470.8V532.8H471.3V534.1H471.8V534.1H472.3V529.8H472.8V529.8H473.3V539.3H473.8V539.3H474.3V528.0H474.8V528.0H475.3V528.0H475.8V533.6H476.3V533.6H476.8V527.9H477.3V527.9H477.8V534.5H478.3V534.5H478.8V534.5H479.3V539.7H479.8V539.7H480.3V539.7H480.8V527.6H481.3V527.6H481.8V527.6H482.3V530.3H482.8V530.3H483.3V530.3H483.8V543.8H484.3V543.8H484.8V543.8H485.3V547.9H485.8V547.9H486.3V530.5H486.8V530.5H487.3V539.3H487.8V539.3H488.3V539.3H488.8V547.9H489.3V547.9H489.8V547.9H490.3V539.0H490.8V539.0H491.3V539.0H491.8V539.0H492.3V528.7H492.8V528.7H493.3V528.7H493.8V528.7H494.3V541.5H494.8V541.5H495.3V540.4H495.8V540.4H496.3V540.4H496.8V540.4H497.3V542.1H497.8V542.1H498.3V538.1H498.8V538.1H499.3V538.1H499.8V527.6H500.3V527.6H500.8V535.3H501.3V535.3H501.8V540.7H502.3V540.7H502.8V540.7H503.3V545.0H503.6V647.8H503.3V647.8H502.8V647.8H502.3V640.2H501.8V640.2H501.3V640.2H500.8V648.6H500.3V648.6H499.8V648.6H499.3V648.6H498.8V643.6H498.3V643.6H497.8V638.6H497.3V638.6H496.8V638.6H496.3V638.8H495.8V638.8H495.3V638.8H494.8V638.8H494.3V648.0H493.8V648.0H493.3V648.0H492.8V641.6H492.3V641.6H491.8V641.6H491.3V638.1H490.8V638.1H490.3V645.9H489.8V645.9H489.3V645.9H488.8V645.9H488.3V648.2H487.8V648.2H487.3V648.2H486.8V647.4H486.3V647.4H485.8V647.4H485.3V636.7H484.8V636.7H484.3V636.7H483.8V638.6H483.3V638.6H482.8V638.6H482.3V640.7H481.8V640.7H481.3V640.7H480.8V648.1H480.3V648.1H479.8V648.1H479.3V648.1H478.8V644.5H478.3V644.5H477.8V644.5H477.3V644.5H476.8V647.0H476.3V647.0H475.8V647.0H475.3V647.0H474.8V646.8H474.3V646.8H473.8V647.6H473.3V647.6H472.8V647.6H472.3V647.6H471.8V645.3H471.3V645.3H470.8V645.3H470.3V645.3H469.8V643.5H469.3V643.5H468.8V638.4H468.3V638.4H467.8V638.4H467.3V646.5H466.8V646.5H466.3V646.5H465.8V639.3H465.3V639.3H464.8V639.3H464.3V641.8H463.8V641.8H463.3V641.8H462.8V641.8H462.3V644.5H461.8V644.5H461.3V639.3H460.8V639.3H460.3V639.3H459.8V637.6H459.3V637.6H458.8V637.6H458.3V646.6H457.8V646.6H457.3V646.6H456.8V646.6H456.3V645.3H455.8V645.3H455.3V645.3H454.8V643.9H454.3V643.9H453.8V643.9H453.3V644.0H452.8V644.0H452.3V644.0H451.8V644.0H451.3V646.4H450.8V646.4H450.3V646.4H449.8V641.6H449.3V641.6H448.8V642.5H448.3V642.5H447.8V642.5H447.3V642.5H446.8V644.5H446.3V644.5H445.8V646.7H445.3V646.7H444.8V637.3H444.3V637.3H443.8V637.3H443.3V639.9H442.8V639.9H442.3V639.9H441.8V639.9H441.3V638.0H440.8V638.0H440.3V638.0H439.8V638.1H439.3V638.1H438.8V638.1H438.3V646.3H437.8V646.3H437.3V648.5H436.8V648.5H436.3V645.9H435.8V645.9H435.3V645.9H434.8V639.3H434.3V639.3H433.8V639.3H433.3V631.5H432.8V631.5H432.3V641.8H431.8V641.8H431.3V641.8H430.8V632.1H430.3V632.1H429.8V632.1H429.3V631.0H428.8V631.0H428.3V626.2H427.8V626.2H427.3V631.6H426.8V631.6H426.3V631.6H425.8V632.5H425.3V632.5H424.8V632.5H424.3V621.8H423.8V621.8H423.3V616.6H422.8V616.6H422.3V616.6H421.8V624.9H421.3V624.9H420.8V624.9H420.3V625.2H419.8V625.2H419.3V625.2H418.8V608.7H418.3V608.7H417.8V608.7H417.3V623.3H416.8V623.3H416.3V618.8H415.8V618.8H415.3V618.8H414.8V619.3H414.3V619.3H413.8V619.3H413.3V619.3H412.8V614.1H412.3V614.1H411.8V614.1H411.3V617.6H410.8V617.6H410.3V617.6H409.8V621.4H409.3V621.4H408.8V621.4H408.3V621.8H407.8V621.8H407.3V616.7H406.8V616.7H406.3V622.9H405.8V622.9H405.3V616.8H404.8V616.8H404.3V616.8H403.8V632.4H403.3V632.4H402.8V632.4H402.3V647.7H401.8V647.7H401.3V647.7H400.8V648.2H400.3V648.2H399.8V648.2H399.3V647.8H398.8V647.8H398.3V647.7H397.8V647.7H397.3V647.7H396.8V648.2H396.3V648.2H395.8V648.2H395.3V648.4H394.8V648.4H394.3V648.4H393.8V647.9H393.3V647.9H392.8V647.9H392.3V647.9H391.8V648.5H391.3V648.5H390.8V648.5H390.3V647.7H389.8V647.7H389.3V648.0H388.8V648.0H388.3V648.0H387.8V648.2H387.3V648.2H386.8V648.2H386.3V648.2H385.8V647.8H385.3V647.8H384.8V648.5H384.3V648.5H383.8V648.5H383.3V647.8H382.8V647.8H382.3V648.2H381.8V648.2H381.3V648.2H380.8V604.0H380.3V604.0H379.8ZM379.8 758.4H380.3V758.4H380.8V758.4H381.3V773.1H381.8V773.1H382.3V775.7H382.8V775.7H383.3V773.1H383.8V773.1H384.3V774.1H384.8V774.1H385.3V774.1H385.8V772.3H386.3V772.3H386.8V772.3H387.3V775.5H387.8V775.5H388.3V775.5H388.8V768.4H389.3V768.4H389.8V768.4H390.3V768.4H390.8V775.7H391.3V775.7H391.8V775.7H392.3V773.8H392.8V773.8H393.3V773.8H393.8V775.5H394.3V775.5H394.8V773.8H395.3V773.8H395.8V775.2H396.3V775.2H396.8V775.2H397.3V772.4H397.8V772.4H398.3V767.4H398.8V767.4H399.3V767.4H399.8V767.5H400.3V767.5H400.8V767.5H401.3V774.6H401.8V774.6H402.3V774.6H402.8V750.5H403.3V750.5H403.8V751.6H404.3V751.6H404.8V751.6H405.3V747.4H405.8V747.4H406.3V747.4H406.8V747.3H407.3V747.3H407.8V774.1H408.3V774.1H408.8V772.1H409.3V772.1H409.8V772.1H410.3V772.1H410.8V754.6H411.3V754.6H411.8V751.3H412.3V751.3H412.8V752.3H413.3V752.3H413.8V752.3H414.3V741.4H414.8V741.4H415.3V741.4H415.8V751.6H416.3V751.6H416.8V751.6H417.3V751.6H417.8V755.5H418.3V755.5H418.8V755.5H419.3V755.5H419.8V749.3H420.3V749.3H420.8V749.3H421.3V735.0H421.8V735.0H422.3V755.4H422.8V755.4H423.3V755.4H423.8V741.5H424.3V741.5H424.8V741.5H425.3V769.0H425.8V769.0H426.3V767.5H426.8V767.5H427.3V767.5H427.8V758.0H428.3V758.0H428.8V758.0H429.3V748.8H429.8V748.8H430.3V748.8H430.8V755.1H431.3V755.1H431.8V761.1H432.3V761.1H432.8V754.4H433.3V754.4H433.8V754.4H434.3V767.5H434.8V767.5H435.3V765.6H435.8V765.6H436.3V765.6H436.8V758.1H437.3V758.1H437.8V758.1H438.3V766.1H438.8V766.1H439.3V766.1H439.8V766.1H440.3V765.9H440.8V765.9H441.3V768.0H441.8V768.0H442.3V768.0H442.8V768.0H443.3V763.7H443.8V763.7H444.3V763.7H444.8V762.1H445.3V762.1H445.8V775.7H446.3V775.7H446.8V773.6H447.3V773.6H447.8V773.6H448.3V770.7H448.8V770.7H449.3V770.7H449.8V769.4H450.3V769.4H450.8V769.4H451.3V767.7H451.8V767.7H452.3V765.8H452.8V765.8H453.3V765.8H453.8V768.7H454.3V768.7H454.8V768.7H455.3V768.7H455.8V775.6H456.3V775.6H456.8V775.6H457.3V774.5H457.8V774.5H458.3V774.5H458.8V774.5H459.3V770.4H459.8V770.4H460.3V769.5H460.8V769.5H461.3V772.2H461.8V772.2H462.3V773.6H462.8V773.6H463.3V773.6H463.8V774.0H464.3V774.0H464.8V774.0H465.3V756.8H465.8V756.8H466.3V756.8H466.8V771.7H467.3V771.7H467.8V772.0H468.3V772.0H468.8V772.0H469.3V772.0H469.8V763.5H470.3V763.5H470.8V763.5H471.3V774.0H471.8V774.0H472.3V774.0H472.8V767.1H473.3V767.1H473.8V767.1H474.3V764.9H474.8V764.9H475.3V775.3H475.8V775.3H476.3V775.3H476.8V775.3H477.3V769.1H477.8V769.1H478.3V772.0H478.8V772.0H479.3V772.0H479.8V775.2H480.3V775.2H480.8V754.5H481.3V754.5H481.8V769.2H482.3V769.2H482.8V769.2H483.3V770.0H483.8V770.0H484.3V770.0H484.8V773.6H485.3V773.6H485.8V768.8H486.3V768.8H486.8V768.8H487.3V768.8H487.8V774.2H488.3V774.2H488.8V765.3H489.3V765.3H489.8V765.5H490.3V765.5H490.8V765.5H491.3V774.7H491.8V774.7H492.3V774.7H492.8V774.7H493.3V769.2H493.8V769.2H494.3V762.4H494.8V762.4H495.3V760.8H495.8V760.8H496.3V753.8H496.8V753.8H497.3V770.9H497.8V770.9H498.3V767.3H498.8V767.3H499.3V768.5H499.8V768.5H500.3V768.5H500.8V768.5H501.3V768.5H501.8V768.5H502.3V768.5H502.8V767.8H503.3V767.8H503.6V656.7H503.3V655.3H502.8V655.3H502.3V655.3H501.8V657.2H501.3V657.2H500.8V657.2H500.3V657.2H499.8V664.5H499.3V664.5H498.8V661.7H498.3V661.7H497.8V661.7H497.3V655.3H496.8V655.3H496.3V665.6H495.8V665.6H495.3V662.0H494.8V662.0H494.3V662.0H493.8V659.3H493.3V659.3H492.8V659.3H492.3V659.3H491.8V663.6H491.3V663.6H490.8V663.6H490.3V662.5H489.8V662.5H489.3V662.5H488.8V662.5H488.3V661.7H487.8V661.7H487.3V660.2H486.8V660.2H486.3V655.3H485.8V655.3H485.3V655.3H484.8V660.5H484.3V660.5H483.8V660.5H483.3V660.5H482.8V662.9H482.3V662.9H481.8V662.9H481.3V659.2H480.8V659.2H480.3V657.9H479.8V657.9H479.3V657.9H478.8V660.1H478.3V660.1H477.8V660.1H477.3V659.2H476.8V659.2H476.3V659.2H475.8V657.3H475.3V657.3H474.8V657.3H474.3V658.1H473.8V658.1H473.3V658.1H472.8V658.1H472.3V664.1H471.8V664.1H471.3V664.1H470.8V664.1H470.3V658.5H469.8V658.5H469.3V655.3H468.8V655.3H468.3V666.8H467.8V666.8H467.3V666.8H466.8V661.1H466.3V661.1H465.8V661.1H465.3V659.4H464.8V659.4H464.3V659.4H463.8V659.4H463.3V666.5H462.8V666.5H462.3V666.5H461.8V666.5H461.3V662.8H460.8V662.8H460.3V662.8H459.8V662.8H459.3V661.2H458.8V661.2H458.3V661.2H457.8V661.2H457.3V658.7H456.8V658.7H456.3V656.6H455.8V656.6H455.3V659.7H454.8V659.7H454.3V659.7H453.8V659.2H453.3V659.2H452.8V659.2H452.3V659.2H451.8V655.3H451.3V655.3H450.8V655.3H450.3V655.3H449.8V655.3H449.3V655.3H448.8V656.3H448.3V656.3H447.8V665.4H447.3V665.4H446.8V659.5H446.3V659.5H445.8V662.6H445.3V662.6H444.8V659.5H444.3V659.5H443.8V656.4H443.3V656.4H442.8V656.4H442.3V656.4H441.8V663.2H441.3V663.2H440.8V663.0H440.3V663.0H439.8V663.0H439.3V666.2H438.8V666.2H438.3V666.2H437.8V666.2H437.3V675.1H436.8V675.1H436.3V665.7H435.8V665.7H435.3V665.7H434.8V669.9H434.3V669.9H433.8V672.0H433.3V672.0H432.8V672.0H432.3V672.0H431.8V666.8H431.3V666.8H430.8V677.0H430.3V677.0H429.8V680.8H429.3V680.8H428.8V680.8H428.3V674.7H427.8V674.7H427.3V674.7H426.8V674.7H426.3V677.2H425.8V677.2H425.3V677.2H424.8V677.2H424.3V682.0H423.8V682.0H423.3V682.0H422.8V682.0H422.3V692.0H421.8V692.0H421.3V694.4H420.8V694.4H420.3V694.4H419.8V687.8H419.3V687.8H418.8V690.9H418.3V690.9H417.8V691.7H417.3V691.7H416.8V688.6H416.3V688.6H415.8V688.6H415.3V688.4H414.8V688.4H414.3V691.3H413.8V691.3H413.3V691.7H412.8V691.7H412.3V691.7H411.8V691.7H411.3V694.7H410.8V694.7H410.3V694.7H409.8V694.7H409.3V688.4H408.8V688.4H408.3V688.4H407.8V694.9H407.3V694.9H406.8V694.9H406.3V688.3H405.8V688.3H405.3V694.4H404.8V694.4H404.3V694.4H403.8V687.5H403.3V687.5H402.8V655.4H402.3V655.4H401.8V655.4H401.3V655.6H400.8V655.6H400.3V655.6H399.8V655.8H399.3V655.8H398.8V656.1H398.3V656.1H397.8V656.0H397.3V656.0H396.8V656.0H396.3V656.0H395.8V656.1H395.3V656.1H394.8V656.1H394.3V656.1H393.8V655.8H393.3V655.8H392.8V655.9H392.3V655.9H391.8V655.9H391.3V657.6H390.8V657.6H390.3V656.0H389.8V656.0H389.3V656.0H388.8V656.0H388.3V655.4H387.8V655.4H387.3V655.7H386.8V655.7H386.3V655.7H385.8V655.7H385.3V655.7H384.8V655.4H384.3V655.4H383.8V656.0H383.3V656.0H382.8V656.0H382.3V655.6H381.8V655.6H381.3V655.6H380.8V655.7H380.3V655.7H379.8ZM508.2 536.4H508.7V536.4H509.2V534.9H509.7V534.9H510.2V534.9H510.7V535.0H511.2V535.0H511.7V535.0H512.2V535.0H512.7V532.8H513.2V532.8H513.7V536.5H514.2V536.5H514.7V536.5H515.2V529.1H515.7V529.1H516.2V529.1H516.7V541.5H517.2V541.5H517.7V534.0H518.2V534.0H518.7V534.0H519.2V547.3H519.7V547.3H520.2V549.2H520.7V549.2H521.2V549.2H521.7V540.3H522.2V540.3H522.7V540.3H523.2V540.3H523.7V539.5H524.2V539.5H524.7V529.8H525.2V529.8H525.7V529.8H526.2V545.3H526.7V545.3H527.2V545.3H527.7V529.5H528.2V529.5H528.7V529.5H529.2V529.5H529.7V547.4H530.2V547.4H530.7V547.4H531.2V544.4H531.7V544.4H532.2V541.6H532.7V541.6H533.2V541.6H533.7V541.6H534.2V547.9H534.7V547.9H535.2V532.4H535.7V532.4H536.2V534.7H536.7V534.7H537.2V536.1H537.7V536.1H538.2V555.0H538.7V555.0H539.2V537.3H539.7V537.3H540.2V537.3H540.7V528.9H541.2V528.9H541.7V538.0H542.2V538.0H542.7V538.0H543.2V538.0H543.7V543.8H544.2V543.8H544.7V543.8H545.2V534.3H545.7V534.3H546.2V534.3H546.7V537.6H547.2V537.6H547.7V537.6H548.2V532.6H548.7V532.6H549.2V534.8H549.7V534.8H550.2V543.9H550.7V543.9H551.2V543.9H551.7V532.2H552.2V532.2H552.7V532.2H553.2V532.2H553.7V538.3H554.2V538.3H554.7V527.6H555.2V527.6H555.7V527.6H556.2V527.6H556.7V532.7H557.2V532.7H557.7V529.5H558.2V529.5H558.7V533.9H559.2V533.9H559.7V533.9H560.2V530.3H560.7V530.3H561.2V530.3H561.7V540.4H562.2V540.4H562.7V540.4H563.2V540.4H563.7V532.8H564.2V532.8H564.7V532.8H565.2V532.8H565.7V539.5H566.2V539.5H566.7V539.5H567.2V530.5H567.7V530.5H568.2V529.5H568.7V529.5H569.2V539.7H569.7V539.7H570.2V539.7H570.7V543.6H571.2V543.6H571.7V543.6H572.2V551.1H572.7V551.1H573.2V551.1H573.7V540.9H574.2V540.9H574.7V540.9H575.2V531.8H575.7V531.8H576.2V531.8H576.7V531.8H577.2V529.8H577.7V529.8H578.2V547.4H578.7V547.4H579.2V547.4H579.7V547.4H580.2V529.9H580.7V529.9H581.2V529.9H581.7V529.9H582.2V538.5H582.7V538.5H583.2V538.4H583.7V538.4H584.2V538.4H584.7V538.4H585.2V547.7H585.7V547.7H586.2V547.7H586.7V547.7H587.2V556.4H587.7V556.4H588.2V556.4H588.7V617.9H588.2V617.9H587.7V617.9H587.2V622.9H586.7V622.9H586.2V632.3H585.7V632.3H585.2V632.3H584.7V637.2H584.2V637.2H583.7V637.2H583.2V648.0H582.7V648.0H582.2V645.7H581.7V645.7H581.2V644.5H580.7V644.5H580.2V644.5H579.7V646.0H579.2V646.0H578.7V646.0H578.2V630.8H577.7V630.8H577.2V630.8H576.7V640.9H576.2V640.9H575.7V641.0H575.2V641.0H574.7V641.0H574.2V641.0H573.7V638.1H573.2V638.1H572.7V642.4H572.2V642.4H571.7V642.4H571.2V642.4H570.7V636.6H570.2V636.6H569.7V636.6H569.2V636.6H568.7V624.9H568.2V624.9H567.7V624.9H567.2V632.9H566.7V632.9H566.2V632.9H565.7V647.2H565.2V647.2H564.7V647.2H564.2V647.2H563.7V647.6H563.2V647.6H562.7V647.6H562.2V647.6H561.7V643.7H561.2V643.7H560.7V643.7H560.2V643.7H559.7V645.8H559.2V645.8H558.7V631.4H558.2V631.4H557.7V631.4H557.2V640.6H556.7V640.6H556.2V640.6H555.7V639.0H555.2V639.0H554.7V625.5H554.2V625.5H553.7V625.5H553.2V625.5H552.7V637.0H552.2V637.0H551.7V646.6H551.2V646.6H550.7V646.6H550.2V631.8H549.7V631.8H549.2V620.6H548.7V620.6H548.2V620.6H547.7V634.2H547.2V634.2H546.7V634.2H546.2V634.0H545.7V634.0H545.2V634.0H544.7V634.0H544.2V629.0H543.7V629.0H543.2V636.1H542.7V636.1H542.2V636.1H541.7V633.0H541.2V633.0H540.7V633.0H540.2V633.0H539.7V630.0H539.2V630.0H538.7V625.5H538.2V625.5H537.7V625.5H537.2V617.3H536.7V617.3H536.2V617.3H535.7V627.6H535.2V627.6H534.7V627.6H534.2V622.3H533.7V622.3H533.2V622.3H532.7V631.4H532.2V631.4H531.7V631.4H531.2V631.4H530.7V629.2H530.2V629.2H529.7V636.3H529.2V636.3H528.7V636.3H528.2V636.3H527.7V634.2H527.2V634.2H526.7V630.1H526.2V630.1H525.7V630.1H525.2V628.7H524.7V628.7H524.2V628.7H523.7V628.7H523.2V633.1H522.7V633.1H522.2V633.1H521.7V633.1H521.2V629.2H520.7V629.2H520.2V614.8H519.7V614.8H519.2V616.0H518.7V616.0H518.2V622.0H517.7V622.0H517.2V615.9H516.7V615.9H516.2V626.0H515.7V626.0H515.2V626.0H514.7V628.6H514.2V628.6H513.7V635.9H513.2V635.9H512.7V635.9H512.2V635.6H511.7V635.6H511.2V636.4H510.7V636.4H510.2V636.4H509.7V636.4H509.2V647.2H508.7V647.2H508.2ZM508.2 747.0H508.7V763.2H509.2V763.2H509.7V768.5H510.2V768.5H510.7V768.5H511.2V772.9H511.7V772.9H512.2V772.9H512.7V772.9H513.2V743.0H513.7V743.0H514.2V743.0H514.7V741.7H515.2V741.7H515.7V742.0H516.2V742.0H516.7V763.6H517.2V763.6H517.7V763.6H518.2V754.8H518.7V754.8H519.2V754.8H519.7V762.6H520.2V762.6H520.7V755.8H521.2V755.8H521.7V755.8H522.2V757.6H522.7V757.6H523.2V757.6H523.7V757.6H524.2V766.0H524.7V766.0H525.2V767.6H525.7V767.6H526.2V767.6H526.7V767.6H527.2V767.6H527.7V763.7H528.2V763.7H528.7V763.7H529.2V756.9H529.7V756.9H530.2V756.9H530.7V765.2H531.2V765.2H531.7V765.2H532.2V765.2H532.7V766.3H533.2V766.3H533.7V769.5H534.2V769.5H534.7V769.5H535.2V769.5H535.7V753.2H536.2V753.2H536.7V753.2H537.2V760.3H537.7V760.3H538.2V760.3H538.7V760.3H539.2V758.6H539.7V758.6H540.2V760.8H540.7V760.8H541.2V766.3H541.7V766.3H542.2V767.7H542.7V767.7H543.2V767.7H543.7V773.0H544.2V773.0H544.7V773.0H545.2V767.1H545.7V767.1H546.2V772.8H546.7V772.8H547.2V772.8H547.7V772.8H548.2V757.8H548.7V757.8H549.2V771.7H549.7V771.7H550.2V771.7H550.7V764.3H551.2V764.3H551.7V764.3H552.2V764.3H552.7V772.4H553.2V772.4H553.7V772.4H554.2V759.6H554.7V759.6H555.2V767.0H555.7V767.0H556.2V767.0H556.7V775.7H557.2V775.7H557.7V769.9H558.2V769.9H558.7V769.9H559.2V762.0H559.7V762.0H560.2V762.0H560.7V771.0H561.2V771.0H561.7V771.0H562.2V768.6H562.7V768.6H563.2V771.7H563.7V771.7H564.2V771.7H564.7V771.7H565.2V763.3H565.7V763.3H566.2V763.3H566.7V763.3H567.2V766.2H567.7V766.2H568.2V766.2H568.7V766.2H569.2V775.3H569.7V775.3H570.2V775.3H570.7V772.4H571.2V772.4H571.7V772.4H572.2V763.4H572.7V763.4H573.2V773.9H573.7V773.9H574.2V773.9H574.7V761.6H575.2V761.6H575.7V761.6H576.2V761.6H576.7V772.8H577.2V772.8H577.7V767.4H578.2V767.4H578.7V774.5H579.2V774.5H579.7V773.6H580.2V773.6H580.7V773.6H581.2V771.0H581.7V771.0H582.2V763.6H582.7V763.6H583.2V763.6H583.7V760.6H584.2V760.6H584.7V760.6H585.2V752.7H585.7V752.7H586.2V754.6H586.7V754.6H587.2V760.4H587.7V760.4H588.2V760.4H588.7V684.6H588.2V684.6H587.7V684.6H587.2V678.7H586.7V678.7H586.2V670.4H585.7V670.4H585.2V670.4H584.7V666.1H584.2V666.1H583.7V656.1H583.2V656.1H582.7V656.1H582.2V656.1H581.7V658.3H581.2V658.3H580.7V666.4H580.2V666.4H579.7V668.1H579.2V668.1H578.7V668.1H578.2V664.3H577.7V664.3H577.2V664.3H576.7V661.3H576.2V661.3H575.7V677.1H575.2V677.1H574.7V677.1H574.2V666.1H573.7V666.1H573.2V666.1H572.7V662.9H572.2V662.9H571.7V660.1H571.2V660.1H570.7V660.1H570.2V660.1H569.7V658.5H569.2V658.5H568.7V658.5H568.2V665.8H567.7V665.8H567.2V660.4H566.7V660.4H566.2V660.4H565.7V663.0H565.2V663.0H564.7V663.0H564.2V665.1H563.7V665.1H563.2V665.1H562.7V665.1H562.2V663.0H561.7V663.0H561.2V663.0H560.7V663.0H560.2V672.0H559.7V672.0H559.2V672.0H558.7V670.1H558.2V670.1H557.7V670.1H557.2V668.1H556.7V668.1H556.2V668.1H555.7V669.1H555.2V669.1H554.7V659.3H554.2V659.3H553.7V659.3H553.2V685.6H552.7V685.6H552.2V685.6H551.7V685.6H551.2V670.3H550.7V670.3H550.2V670.3H549.7V686.4H549.2V686.4H548.7V669.3H548.2V669.3H547.7V669.3H547.2V677.4H546.7V677.4H546.2V668.5H545.7V668.5H545.2V668.0H544.7V668.0H544.2V668.0H543.7V670.9H543.2V670.9H542.7V670.9H542.2V660.6H541.7V660.6H541.2V660.6H540.7V660.6H540.2V670.7H539.7V670.7H539.2V670.7H538.7V668.9H538.2V668.9H537.7V668.9H537.2V676.1H536.7V676.1H536.2V676.1H535.7V672.8H535.2V672.8H534.7V672.8H534.2V672.8H533.7V688.4H533.2V688.4H532.7V669.8H532.2V669.8H531.7V669.8H531.2V669.8H530.7V670.1H530.2V670.1H529.7V670.1H529.2V670.1H528.7V667.8H528.2V667.8H527.7V667.8H527.2V667.8H526.7V679.1H526.2V679.1H525.7V677.2H525.2V677.2H524.7V677.2H524.2V667.7H523.7V667.7H523.2V685.0H522.7V685.0H522.2V685.0H521.7V671.8H521.2V671.8H520.7V671.8H520.2V678.3H519.7V678.3H519.2V678.3H518.7V686.7H518.2V686.7H517.7V664.3H517.2V664.3H516.7V664.3H516.2V664.3H515.7V666.3H515.2V666.3H514.7V676.0H514.2V676.0H513.7V665.6H513.2V665.6H512.7V661.9H512.2V661.9H511.7V667.0H511.2V667.0H510.7V667.0H510.2V666.1H509.7V666.1H509.2V666.1H508.7V666.1H508.2ZM591.4 556.4H591.9V556.4H592.4V567.3H592.9V567.3H593.4V567.3H593.9V565.3H594.4V565.3H594.9V565.3H595.4V565.3H595.9V564.5H596.4V564.5H596.9V554.6H597.4V554.6H597.9V554.6H598.4V556.1H598.9V556.1H599.4V556.1H599.9V557.5H600.4V557.5H600.9V557.5H601.4V557.5H601.9V556.6H602.4V556.6H602.9V556.6H603.4V562.4H603.9V562.4H604.4V562.4H604.9V563.1H605.4V563.1H605.9V563.1H606.4V563.1H606.9V553.2H607.4V553.2H607.9V553.2H608.4V554.0H608.9V554.0H609.4V554.9H609.9V554.9H610.4V559.1H610.9V559.1H611.4V560.0H611.9V560.0H612.4V534.5H612.9V534.5H613.4V546.7H613.9V546.7H614.4V546.7H614.9V546.7H615.4V562.2H615.9V562.2H616.4V562.2H616.9V562.2H617.4V559.1H617.9V559.1H618.4V559.1H618.9V545.9H619.4V545.9H619.9V545.6H620.4V545.6H620.9V545.6H621.4V545.6H621.9V546.7H622.4V546.7H622.9V546.7H623.4V546.7H623.9V541.4H624.4V541.4H624.9V541.4H625.4V551.8H625.9V551.8H626.4V551.8H626.9V551.8H627.4V544.8H627.9V544.8H628.4V539.0H628.9V539.0H629.4V539.0H629.9V539.0H630.4V551.4H630.9V551.4H631.4V551.4H631.9V544.5H632.4V544.5H632.9V550.6H633.4V550.6H633.9V550.6H634.4V541.8H634.9V541.8H635.4V538.7H635.9V538.7H636.4V538.7H636.9V534.9H637.4V534.9H637.9V538.0H638.4V538.0H638.9V538.0H639.4V534.1H639.9V534.1H640.4V534.1H640.9V537.1H641.4V537.1H641.9V537.1H642.4V533.8H642.9V533.8H643.4V532.9H643.9V532.9H644.4V532.9H644.9V531.5H645.4V531.5H645.9V531.5H646.4V529.9H646.9V529.9H647.4V529.9H647.9V529.9H648.4V529.7H648.9V529.7H649.4V529.7H649.9V529.7H650.4V528.3H650.9V528.3H651.4V528.3H651.9V528.3H652.4V528.5H652.9V528.5H653.4V528.5H653.9V533.0H654.4V533.0H654.9V533.0H655.4V533.0H655.9V528.5H656.4V528.5H656.9V528.5H657.4V527.6H657.9V527.6H658.4V527.6H658.9V536.0H659.4V536.0H659.9V536.0H660.4V536.0H660.9V531.6H661.4V531.6H661.9V531.6H662.4V531.6H662.9V550.9H663.4V550.9H663.9V550.9H664.4V550.3H664.9V550.3H665.4V550.3H665.9V529.5H666.4V529.5H666.9V556.8H667.4V556.8H667.9V556.8H668.4V556.8H668.9V532.2H669.4V532.2H669.9V532.2H670.4V532.7H670.9V532.7H671.4V539.9H671.9V539.9H672.4V554.6H672.9V554.6H673.4V539.1H673.9V539.1H674.4V539.1H674.9V541.8H675.4V541.8H675.9V529.9H676.4V529.9H676.9V529.9H677.4V528.3H677.9V528.3H678.4V528.3H678.9V529.3H679.4V529.3H679.9V529.3H680.4V529.3H680.9V538.8H681.4V538.8H681.9V553.4H682.4V553.4H682.9V552.1H683.4V552.1H683.9V552.1H684.4V545.0H684.9V545.0H685.4V555.8H685.9V555.8H686.4V555.8H686.9V555.8H687.4V535.5H687.9V535.5H688.4V535.5H688.9V531.4H689.4V531.4H689.9V531.4H690.4V531.4H690.9V553.2H691.4V553.2H691.9V529.2H692.4V529.2H692.9V539.4H693.4V539.4H693.9V538.5H694.4V538.5H694.9V538.5H695.4V535.4H695.9V535.4H696.4V553.8H696.9V553.8H697.4V553.8H697.9V538.9H698.4V538.9H698.9V528.1H699.4V528.1H699.9V540.3H700.4V540.3H700.9V532.2H701.4V532.2H701.9V532.2H702.4V532.2H702.9V532.3H703.4V532.3H703.9V547.8H704.4V547.8H704.9V547.8H705.4V547.8H705.9V562.1H706.4V562.1H706.9V542.3H707.4V542.3H707.9V546.3H708.4V546.3H708.9V551.1H709.4V551.1H709.9V528.7H710.4V528.7H710.9V539.2H711.4V539.2H711.9V539.2H712.4V530.6H712.9V530.6H713.4V530.6H713.9V536.1H714.4V536.1H714.9V536.1H715.4V533.6H715.9V533.6H716.4V534.1H716.9V534.1H717.4V553.2H717.9V553.2H718.4V553.2H718.9V531.8H719.4V531.8H719.9V540.1H720.4V540.1H720.9V540.1H721.4V531.8H721.9V531.8H722.4V531.8H722.9V550.6H723.4V550.6H723.9V550.6H724.4V554.2H724.9V554.2H725.4V554.2H725.9V555.6H726.4V555.6H726.9V555.6H727.4V534.9H727.9V534.9H728.4V534.7H728.9V534.7H729.4V557.6H729.9V557.6H730.4V557.6H730.9V531.4H731.4V531.4H731.9V555.6H732.4V555.6H732.9V555.6H733.4V542.8H733.9V542.8H734.4V542.8H734.9V542.8H735.4V548.0H735.9V548.0H736.4V540.5H736.9V540.5H737.4V540.5H737.9V540.5H738.4V530.8H738.9V530.8H739.4V530.8H739.9V542.5H740.4V542.5H740.9V527.8H741.4V527.8H741.9V527.8H742.4V527.6H742.9V527.6H743.4V537.4H743.9V537.4H744.4V538.2H744.9V538.2H745.4V538.2H745.5V634.6H745.4V634.6H744.9V634.6H744.4V642.1H743.9V642.1H743.4V628.9H742.9V628.9H742.4V628.9H741.9V629.0H741.4V629.0H740.9V629.0H740.4V629.2H739.9V629.2H739.4V645.9H738.9V645.9H738.4V645.9H737.9V642.6H737.4V642.6H736.9V642.6H736.4V642.6H735.9V648.6H735.4V648.6H734.9V648.6H734.4V648.6H733.9V645.7H733.4V645.7H732.9V645.7H732.4V635.9H731.9V635.9H731.4V645.1H730.9V645.1H730.4V638.1H729.9V638.1H729.4V638.1H728.9V631.1H728.4V631.1H727.9V631.1H727.4V631.1H726.9V639.4H726.4V639.4H725.9V641.8H725.4V641.8H724.9V632.1H724.4V632.1H723.9V632.1H723.4V632.7H722.9V632.7H722.4V632.7H721.9V621.8H721.4V621.8H720.9V643.3H720.4V643.3H719.9V643.3H719.4V646.3H718.9V646.3H718.4V646.3H717.9V646.3H717.4V644.9H716.9V644.9H716.4V644.9H715.9V644.9H715.4V644.9H714.9V644.9H714.4V644.9H713.9V644.9H713.4V632.8H712.9V632.8H712.4V627.1H711.9V627.1H711.4V627.1H710.9V647.5H710.4V647.5H709.9V648.6H709.4V648.6H708.9V648.6H708.4V648.6H707.9V648.6H707.4V627.4H706.9V627.4H706.4V627.4H705.9V648.6H705.4V648.6H704.9V644.7H704.4V644.7H703.9V644.7H703.4V647.4H702.9V647.4H702.4V647.4H701.9V647.4H701.4V645.7H700.9V645.7H700.4V645.7H699.9V645.7H699.4V637.9H698.9V637.9H698.4V637.9H697.9V637.9H697.4V624.0H696.9V624.0H696.4V648.3H695.9V648.3H695.4V625.6H694.9V625.6H694.4V635.4H693.9V635.4H693.4V645.4H692.9V645.4H692.4V627.3H691.9V627.3H691.4V643.7H690.9V643.7H690.4V643.7H689.9V643.7H689.4V648.6H688.9V648.6H688.4V628.6H687.9V628.6H687.4V628.6H686.9V628.6H686.4V645.6H685.9V645.6H685.4V645.6H684.9V641.2H684.4V641.2H683.9V641.2H683.4V645.1H682.9V645.1H682.4V645.1H681.9V645.1H681.4V635.7H680.9V635.7H680.4V635.7H679.9V635.7H679.4V626.2H678.9V626.2H678.4V626.2H677.9V626.2H677.4V643.3H676.9V643.3H676.4V629.9H675.9V629.9H675.4V641.6H674.9V641.6H674.4V641.6H673.9V630.3H673.4V630.3H672.9V630.3H672.4V623.1H671.9V623.1H671.4V641.2H670.9V641.2H670.4V641.2H669.9V648.6H669.4V648.6H668.9V648.6H668.4V648.6H667.9V647.4H667.4V647.4H666.9V647.4H666.4V639.9H665.9V639.9H665.4V639.9H664.9V638.7H664.4V638.7H663.9V638.7H663.4V640.9H662.9V640.9H662.4V640.9H661.9V648.3H661.4V648.3H660.9V648.3H660.4V648.3H659.9V646.1H659.4V646.1H658.9V644.4H658.4V644.4H657.9V644.4H657.4V644.4H656.9V644.4H656.4V644.4H655.9V644.8H655.4V644.8H654.9V647.1H654.4V647.1H653.9V647.1H653.4V647.1H652.9V647.4H652.4V647.4H651.9V647.4H651.4V647.7H650.9V647.7H650.4V647.7H649.9V647.2H649.4V647.2H648.9V647.2H648.4V644.7H647.9V644.7H647.4V644.7H646.9V643.6H646.4V643.6H645.9V643.6H645.4V643.6H644.9V643.4H644.4V643.4H643.9V643.4H643.4V643.4H642.9V641.7H642.4V641.7H641.9V641.7H641.4V641.9H640.9V641.9H640.4V639.5H639.9V639.5H639.4V638.2H638.9V638.2H638.4V638.2H637.9V638.2H637.4V641.2H636.9V641.2H636.4V639.6H635.9V639.6H635.4V639.1H634.9V639.1H634.4V639.8H633.9V639.8H633.4V639.8H632.9V631.5H632.4V631.5H631.9V631.5H631.4V631.5H630.9V637.3H630.4V637.3H629.9V637.3H629.4V635.8H628.9V635.8H628.4V634.7H627.9V634.7H627.4V634.7H626.9V636.1H626.4V636.1H625.9V633.2H625.4V633.2H624.9V633.2H624.4V617.4H623.9V617.4H623.4V617.4H622.9V634.1H622.4V634.1H621.9V634.1H621.4V631.9H620.9V631.9H620.4V628.6H619.9V628.6H619.4V628.6H618.9V626.8H618.4V626.8H617.9V626.8H617.4V626.8H616.9V629.9H616.4V629.9H615.9V629.9H615.4V629.9H614.9V629.9H614.4V629.9H613.9V629.9H613.4V619.1H612.9V619.1H612.4V619.1H611.9V619.1H611.4V627.8H610.9V627.8H610.4V627.8H609.9V627.8H609.4V620.6H608.9V620.6H608.4V620.6H607.9V622.6H607.4V622.6H606.9V622.6H606.4V622.6H605.9V624.0H605.4V624.0H604.9V624.0H604.4V624.0H603.9V623.9H603.4V623.9H602.9V623.9H602.4V622.1H601.9V622.1H601.4V621.0H600.9V621.0H600.4V621.0H599.9V621.6H599.4V621.6H598.9V616.4H598.4V616.4H597.9V616.8H597.4V616.8H596.9V614.4H596.4V614.4H595.9V614.4H595.4V603.0H594.9V603.0H594.4V603.0H593.9V618.0H593.4V618.0H592.9V618.0H592.4V636.9H591.9V636.9H591.4ZM591.4 765.1H591.9V739.7H592.4V739.7H592.9V736.0H593.4V736.0H593.9V736.0H594.4V738.9H594.9V738.9H595.4V738.9H595.9V741.4H596.4V741.4H596.9V745.1H597.4V745.1H597.9V736.5H598.4V736.5H598.9V736.5H599.4V745.4H599.9V745.4H600.4V745.4H600.9V747.3H601.4V747.3H601.9V747.3H602.4V763.6H602.9V763.6H603.4V750.3H603.9V750.3H604.4V750.3H604.9V750.3H605.4V749.2H605.9V749.2H606.4V735.2H606.9V735.2H607.4V735.2H607.9V744.8H608.4V744.8H608.9V753.1H609.4V753.1H609.9V748.4H610.4V748.4H610.9V748.4H611.4V748.3H611.9V748.3H612.4V748.3H612.9V749.0H613.4V749.0H613.9V745.7H614.4V745.7H614.9V745.7H615.4V745.7H615.9V757.1H616.4V757.1H616.9V757.1H617.4V752.6H617.9V752.6H618.4V745.2H618.9V745.2H619.4V745.2H619.9V758.5H620.4V758.5H620.9V758.5H621.4V758.5H621.9V761.2H622.4V761.2H622.9V761.2H623.4V761.2H623.9V754.5H624.4V754.5H624.9V754.5H625.4V754.5H625.9V760.6H626.4V760.6H626.9V760.6H627.4V751.8H627.9V751.8H628.4V751.8H628.9V751.8H629.4V765.5H629.9V765.5H630.4V765.5H630.9V761.4H631.4V761.4H631.9V763.5H632.4V763.5H632.9V763.5H633.4V758.2H633.9V758.2H634.4V758.2H634.9V758.2H635.4V765.7H635.9V765.7H636.4V764.1H636.9V764.1H637.4V768.4H637.9V768.4H638.4V768.4H638.9V768.4H639.4V769.9H639.9V769.9H640.4V765.5H640.9V765.5H641.4V765.5H641.9V774.9H642.4V774.9H642.9V774.9H643.4V774.9H643.9V769.5H644.4V769.5H644.9V769.5H645.4V772.9H645.9V772.9H646.4V773.0H646.9V773.0H647.4V773.0H647.9V773.0H648.4V773.0H648.9V773.0H649.4V774.3H649.9V774.3H650.4V774.3H650.9V774.3H651.4V775.2H651.9V775.2H652.4V775.2H652.9V774.4H653.4V774.4H653.9V772.9H654.4V772.9H654.9V772.9H655.4V773.3H655.9V773.3H656.4V773.3H656.9V773.3H657.4V772.4H657.9V772.4H658.4V772.4H658.9V771.1H659.4V771.1H659.9V771.1H660.4V768.5H660.9V768.5H661.4V758.1H661.9V758.1H662.4V750.2H662.9V750.2H663.4V771.6H663.9V771.6H664.4V771.6H664.9V771.6H665.4V752.4H665.9V752.4H666.4V752.4H666.9V752.4H667.4V759.5H667.9V759.5H668.4V763.8H668.9V763.8H669.4V763.8H669.9V763.8H670.4V771.9H670.9V771.9H671.4V771.9H671.9V768.0H672.4V768.0H672.9V768.0H673.4V768.0H673.9V769.2H674.4V769.2H674.9V769.2H675.4V750.6H675.9V750.6H676.4V750.6H676.9V748.5H677.4V748.5H677.9V748.5H678.4V748.5H678.9V756.1H679.4V756.1H679.9V756.1H680.4V761.8H680.9V761.8H681.4V761.8H681.9V755.2H682.4V755.2H682.9V755.2H683.4V752.5H683.9V752.5H684.4V752.5H684.9V741.5H685.4V741.5H685.9V741.5H686.4V750.8H686.9V750.8H687.4V749.0H687.9V749.0H688.4V772.8H688.9V772.8H689.4V770.4H689.9V770.4H690.4V770.4H690.9V744.6H691.4V744.6H691.9V744.6H692.4V768.0H692.9V768.0H693.4V757.2H693.9V757.2H694.4V757.2H694.9V749.1H695.4V749.1H695.9V764.4H696.4V764.4H696.9V761.4H697.4V761.4H697.9V759.5H698.4V759.5H698.9V759.5H699.4V753.6H699.9V753.6H700.4V753.6H700.9V753.6H701.4V757.6H701.9V757.6H702.4V757.6H702.9V757.6H703.4V774.6H703.9V774.6H704.4V752.7H704.9V752.7H705.4V752.7H705.9V774.8H706.4V774.8H706.9V774.8H707.4V749.2H707.9V749.2H708.4V749.2H708.9V749.2H709.4V773.5H709.9V773.5H710.4V773.5H710.9V751.1H711.4V751.1H711.9V771.3H712.4V771.3H712.9V771.3H713.4V769.6H713.9V769.6H714.4V769.6H714.9V769.6H715.4V768.9H715.9V768.9H716.4V768.9H716.9V771.6H717.4V771.6H717.9V757.1H718.4V757.1H718.9V757.1H719.4V763.9H719.9V763.9H720.4V763.9H720.9V763.9H721.4V773.3H721.9V773.3H722.4V762.5H722.9V762.5H723.4V762.5H723.9V760.0H724.4V760.0H724.9V760.0H725.4V773.2H725.9V773.2H726.4V775.3H726.9V775.3H727.4V775.3H727.9V761.8H728.4V761.8H728.9V761.8H729.4V761.8H729.9V751.9H730.4V751.9H730.9V751.9H731.4V751.9H731.9V755.2H732.4V755.2H732.9V749.6H733.4V749.6H733.9V775.4H734.4V775.4H734.9V775.4H735.4V775.4H735.9V773.1H736.4V773.1H736.9V772.7H737.4V772.7H737.9V772.7H738.4V771.3H738.9V771.3H739.4V771.3H739.9V769.3H740.4V769.3H740.9V764.6H741.4V764.6H741.9V768.3H742.4V768.3H742.9V768.3H743.4V775.6H743.9V775.6H744.4V756.4H744.9V756.4H745.4V738.6H745.5V688.4H745.4V659.5H744.9V659.5H744.4V659.5H743.9V659.5H743.4V663.9H742.9V663.9H742.4V667.7H741.9V667.7H741.4V667.7H740.9V667.7H740.4V656.1H739.9V656.1H739.4V656.1H738.9V656.1H738.4V660.6H737.9V660.6H737.4V660.6H736.9V660.6H736.4V663.7H735.9V663.7H735.4V663.7H734.9V663.7H734.4V660.1H733.9V660.1H733.4V660.1H732.9V671.6H732.4V671.6H731.9V671.6H731.4V655.3H730.9V655.3H730.4V672.7H729.9V672.7H729.4V657.7H728.9V657.7H728.4V657.7H727.9V676.3H727.4V676.3H726.9V662.1H726.4V662.1H725.9V662.1H725.4V662.1H724.9V671.7H724.4V671.7H723.9V671.7H723.4V659.3H722.9V659.3H722.4V657.0H721.9V657.0H721.4V661.3H720.9V661.3H720.4V673.0H719.9V673.0H719.4V673.0H718.9V662.2H718.4V662.2H717.9V662.2H717.4V655.3H716.9V655.3H716.4V655.3H715.9V682.9H715.4V682.9H714.9V657.6H714.4V657.6H713.9V657.6H713.4V680.0H712.9V680.0H712.4V680.0H711.9V675.0H711.4V675.0H710.9V675.0H710.4V660.9H709.9V660.9H709.4V660.9H708.9V664.7H708.4V664.7H707.9V664.7H707.4V664.7H706.9V656.7H706.4V656.7H705.9V655.3H705.4V655.3H704.9V655.3H704.4V656.9H703.9V656.9H703.4V660.5H702.9V660.5H702.4V660.7H701.9V660.7H701.4V663.4H700.9V663.4H700.4V663.4H699.9V657.8H699.4V657.8H698.9V657.8H698.4V674.4H697.9V674.4H697.4V674.4H696.9V666.9H696.4V666.9H695.9V666.9H695.4V665.4H694.9V665.4H694.4V665.4H693.9V665.4H693.4V661.1H692.9V661.1H692.4V661.1H691.9V657.8H691.4V657.8H690.9V657.8H690.4V657.8H689.9V667.1H689.4V667.1H688.9V660.6H688.4V660.6H687.9V660.6H687.4V673.0H686.9V673.0H686.4V673.0H685.9V673.0H685.4V668.6H684.9V668.6H684.4V668.6H683.9V670.2H683.4V670.2H682.9V670.2H682.4V670.2H681.9V667.0H681.4V667.0H680.9V667.0H680.4V660.5H679.9V660.5H679.4V658.7H678.9V658.7H678.4V658.7H677.9V671.1H677.4V671.1H676.9V671.1H676.4V657.8H675.9V657.8H675.4V668.5H674.9V668.5H674.4V668.7H673.9V668.7H673.4V668.7H672.9V668.7H672.4V659.0H671.9V659.0H671.4V655.6H670.9V655.6H670.4V663.3H669.9V663.3H669.4V663.3H668.9V667.3H668.4V667.3H667.9V667.9H667.4V667.9H666.9V667.9H666.4V665.7H665.9V665.7H665.4V665.7H664.9V665.7H664.4V661.3H663.9V661.3H663.4V661.3H662.9V678.4H662.4V678.4H661.9V678.4H661.4V666.3H660.9V666.3H660.4V665.0H659.9V665.0H659.4V665.0H658.9V665.0H658.4V664.7H657.9V664.7H657.4V662.3H656.9V662.3H656.4V658.5H655.9V658.5H655.4V660.9H654.9V660.9H654.4V660.9H653.9V656.3H653.4V656.3H652.9V656.3H652.4V655.7H651.9V655.7H651.4V655.7H650.9V655.7H650.4V656.0H649.9V656.0H649.4V657.2H648.9V657.2H648.4V657.2H647.9V658.1H647.4V658.1H646.9V659.6H646.4V659.6H645.9V671.6H645.4V671.6H644.9V671.6H644.4V659.7H643.9V659.7H643.4V663.1H642.9V663.1H642.4V660.9H641.9V660.9H641.4V660.9H640.9V665.2H640.4V665.2H639.9V665.1H639.4V665.1H638.9V665.1H638.4V655.6H637.9V655.6H637.4V655.6H636.9V655.6H636.4V664.0H635.9V664.0H635.4V663.2H634.9V663.2H634.4V668.4H633.9V668.4H633.4V668.0H632.9V668.0H632.4V668.1H631.9V668.1H631.4V668.1H630.9V668.1H630.4V673.8H629.9V673.8H629.4V673.8H628.9V673.8H628.4V668.0H627.9V668.0H627.4V668.0H626.9V675.1H626.4V675.1H625.9V675.1H625.4V675.1H624.9V676.2H624.4V676.2H623.9V676.2H623.4V676.2H622.9V673.8H622.4V673.8H621.9V675.4H621.4V675.4H620.9V675.4H620.4V675.4H619.9V674.3H619.4V674.3H618.9V674.3H618.4V682.6H617.9V682.6H617.4V675.4H616.9V675.4H616.4V675.4H615.9V675.4H615.4V677.0H614.9V677.0H614.4V677.0H613.9V675.2H613.4V675.2H612.9V675.2H612.4V677.3H611.9V677.3H611.4V677.3H610.9V677.3H610.4V678.1H609.9V678.1H609.4V694.1H608.9V694.1H608.4V694.1H607.9V681.5H607.4V681.5H606.9V681.5H606.4V684.3H605.9V684.3H605.4V680.1H604.9V680.1H604.4V680.1H603.9V680.1H603.4V681.1H602.9V681.1H602.4V681.1H601.9V687.3H601.4V687.3H600.9V687.3H600.4V681.3H599.9V681.3H599.4V681.3H598.9V686.2H598.4V686.2H597.9V684.3H597.4V684.3H596.9V684.3H596.4V684.3H595.9V687.2H595.4V687.2H594.9V687.2H594.4V691.1H593.9V691.1H593.4V691.1H592.9V689.1H592.4V689.1H591.9V689.1H591.4ZM749.0 564.9H749.5V551.3H750.0V551.3H750.5V551.3H751.0V541.5H751.5V541.5H752.0V541.5H752.5V536.6H753.0V536.6H753.5V536.6H754.0V537.2H754.5V537.2H755.0V537.2H755.5V537.2H756.0V533.5H756.5V533.5H757.0V533.5H757.5V533.9H758.0V533.9H758.5V528.2H759.0V528.2H759.5V531.9H760.0V531.9H760.5V533.6H761.0V533.6H761.5V533.6H762.0V539.7H762.5V539.7H763.0V542.3H763.5V542.3H764.0V533.5H764.5V533.5H765.0V533.5H765.5V533.5H766.0V533.6H766.5V533.6H767.0V533.6H767.5V532.2H768.0V532.2H768.5V537.2H769.0V537.2H769.5V535.8H770.0V535.8H770.5V535.6H771.0V535.6H771.5V535.6H772.0V532.4H772.5V532.4H773.0V531.1H773.5V531.1H774.0V531.1H774.5V528.7H775.0V528.7H775.5V528.7H776.0V534.3H776.5V534.3H777.0V534.3H777.5V534.3H778.0V529.7H778.5V529.7H779.0V530.2H779.5V530.2H780.0V530.2H780.5V530.2H781.0V530.5H781.5V530.5H782.0V535.9H782.5V535.9H783.0V543.9H783.5V543.9H784.0V535.2H784.5V535.2H785.0V537.1H785.5V537.1H786.0V537.1H786.5V537.1H787.0V529.4H787.5V529.4H788.0V529.4H788.5V529.4H789.0V533.7H789.5V533.7H790.0V533.7H790.5V533.7H791.0V535.4H791.5V535.4H792.0V536.1H792.5V536.1H793.0V536.1H793.5V546.4H794.0V546.4H794.5V540.3H795.0V540.3H795.5V540.3H796.0V545.2H796.5V545.2H797.0V545.2H797.5V553.7H798.0V553.7H798.5V538.7H799.0V538.7H799.5V545.7H800.0V545.7H800.5V545.7H801.0V535.9H801.5V535.9H802.0V535.9H802.5V536.8H803.0V536.8H803.5V529.6H804.0V529.6H804.5V529.6H805.0V543.1H805.5V543.1H806.0V530.5H806.5V530.5H807.0V530.5H807.5V530.4H808.0V530.4H808.5V541.4H809.0V541.4H809.5V550.3H810.0V550.3H810.5V550.3H811.0V550.3H811.5V555.9H812.0V555.9H812.5V555.9H813.0V555.9H813.5V529.7H814.0V529.7H814.5V550.4H815.0V550.4H815.5V550.4H816.0V527.9H816.5V527.9H817.0V528.2H817.5V528.2H818.0V528.2H818.5V528.3H819.0V528.3H819.5V528.4H820.0V528.4H820.5V528.0H821.0V528.0H821.5V527.8H822.0V527.8H822.5V527.8H823.0V527.6H823.5V527.6H824.0V527.6H824.5V527.6H825.0V528.2H825.5V528.2H826.0V528.2H826.5V528.2H827.0V528.4H827.5V528.4H828.0V528.0H828.5V528.0H829.0V528.2H829.5V528.2H830.0V528.2H830.5V528.4H831.0V528.4H831.5V528.4H832.0V528.4H832.5V527.8H833.0V527.8H833.5V527.8H834.0V527.8H834.5V527.8H835.0V527.8H835.5V527.6H836.0V527.6H836.5V527.6H837.0V528.1H837.5V528.1H838.0V528.1H838.5V527.9H839.0V527.9H839.5V527.9H840.0V528.3H840.5V528.3H841.0V535.6H841.5V535.6H842.0V535.6H842.5V527.8H843.0V527.8H843.5V527.8H844.0V528.4H844.5V528.4H845.0V528.4H845.5V528.1H846.0V528.1H846.4V648.4H846.0V647.8H845.5V647.8H845.0V647.8H844.5V648.2H844.0V648.2H843.5V648.5H843.0V648.5H842.5V648.5H842.0V642.3H841.5V642.3H841.0V648.1H840.5V648.1H840.0V648.5H839.5V648.5H839.0V648.5H838.5V647.7H838.0V647.7H837.5V647.7H837.0V648.0H836.5V648.0H836.0V648.3H835.5V648.3H835.0V648.3H834.5V648.3H834.0V648.3H833.5V648.1H833.0V648.1H832.5V648.1H832.0V647.9H831.5V647.9H831.0V648.4H830.5V648.4H830.0V648.5H829.5V648.5H829.0V648.5H828.5V647.9H828.0V647.9H827.5V648.6H827.0V648.6H826.5V648.6H826.0V647.9H825.5V647.9H825.0V647.9H824.5V647.9H824.0V647.8H823.5V647.8H823.0V647.8H822.5V648.3H822.0V648.3H821.5V647.9H821.0V647.9H820.5V648.4H820.0V648.4H819.5V648.3H819.0V648.3H818.5V648.3H818.0V648.0H817.5V648.0H817.0V648.0H816.5V633.1H816.0V633.1H815.5V633.1H815.0V636.5H814.5V636.5H814.0V639.0H813.5V639.0H813.0V626.3H812.5V626.3H812.0V626.3H811.5V626.3H811.0V637.1H810.5V637.1H810.0V637.1H809.5V625.6H809.0V625.6H808.5V625.6H808.0V632.6H807.5V632.6H807.0V632.6H806.5V636.2H806.0V636.2H805.5V630.9H805.0V630.9H804.5V639.4H804.0V639.4H803.5V639.4H803.0V632.3H802.5V632.3H802.0V620.1H801.5V620.1H801.0V635.8H800.5V635.8H800.0V637.4H799.5V637.4H799.0V637.4H798.5V635.1H798.0V635.1H797.5V635.8H797.0V635.8H796.5V635.8H796.0V635.6H795.5V635.6H795.0V635.6H794.5V635.6H794.0V645.0H793.5V645.0H793.0V645.0H792.5V645.0H792.0V638.3H791.5V638.3H791.0V638.3H790.5V648.2H790.0V648.2H789.5V648.2H789.0V641.7H788.5V641.7H788.0V648.5H787.5V648.5H787.0V640.7H786.5V640.7H786.0V640.7H785.5V643.6H785.0V643.6H784.5V643.6H784.0V643.6H783.5V635.3H783.0V635.3H782.5V635.3H782.0V641.0H781.5V641.0H781.0V641.0H780.5V641.0H780.0V641.2H779.5V641.2H779.0V641.2H778.5V641.2H778.0V646.6H777.5V646.6H777.0V646.6H776.5V643.0H776.0V643.0H775.5V641.7H775.0V641.7H774.5V641.7H774.0V639.5H773.5V639.5H773.0V639.5H772.5V643.0H772.0V643.0H771.5V643.0H771.0V642.9H770.5V642.9H770.0V647.8H769.5V647.8H769.0V639.7H768.5V639.7H768.0V639.7H767.5V639.7H767.0V641.0H766.5V641.0H766.0V641.0H765.5V641.0H765.0V640.2H764.5V640.2H764.0V642.2H763.5V642.2H763.0V642.2H762.5V642.2H762.0V645.8H761.5V645.8H761.0V648.6H760.5V648.6H760.0V648.6H759.5V640.9H759.0V640.9H758.5V640.9H758.0V640.9H757.5V648.3H757.0V648.3H756.5V648.6H756.0V648.6H755.5V648.6H755.0V648.6H754.5V644.3H754.0V644.3H753.5V644.3H753.0V644.3H752.5V626.1H752.0V626.1H751.5V626.1H751.0V626.1H750.5V615.4H750.0V615.4H749.5V615.4H749.0ZM749.0 775.2H749.5V759.5H750.0V759.5H750.5V762.8H751.0V762.8H751.5V762.8H752.0V767.9H752.5V767.9H753.0V770.5H753.5V770.5H754.0V770.4H754.5V770.4H755.0V770.4H755.5V762.8H756.0V762.8H756.5V762.8H757.0V769.5H757.5V769.5H758.0V769.5H758.5V769.5H759.0V771.8H759.5V771.8H760.0V775.6H760.5V775.6H761.0V775.6H761.5V767.8H762.0V767.8H762.5V767.8H763.0V767.0H763.5V767.0H764.0V772.5H764.5V772.5H765.0V772.5H765.5V772.5H766.0V769.6H766.5V769.6H767.0V769.6H767.5V771.0H768.0V771.0H768.5V771.0H769.0V768.6H769.5V768.6H770.0V772.6H770.5V772.6H771.0V772.6H771.5V772.6H772.0V770.9H772.5V770.9H773.0V770.9H773.5V768.4H774.0V768.4H774.5V771.2H775.0V771.2H775.5V771.2H776.0V771.2H776.5V774.5H777.0V774.5H777.5V766.8H778.0V766.8H778.5V766.8H779.0V766.8H779.5V766.7H780.0V766.7H780.5V766.7H781.0V769.0H781.5V769.0H782.0V769.0H782.5V769.0H783.0V766.8H783.5V766.8H784.0V774.0H784.5V774.0H785.0V775.1H785.5V775.1H786.0V773.0H786.5V773.0H787.0V773.0H787.5V775.7H788.0V775.7H788.5V775.7H789.0V775.7H789.5V769.7H790.0V769.7H790.5V769.7H791.0V767.5H791.5V767.5H792.0V767.5H792.5V766.3H793.0V766.3H793.5V769.0H794.0V769.0H794.5V769.0H795.0V769.0H795.5V768.7H796.0V768.7H796.5V762.5H797.0V762.5H797.5V762.5H798.0V770.3H798.5V770.3H799.0V765.6H799.5V765.6H800.0V765.6H800.5V765.6H801.0V768.1H801.5V768.1H802.0V759.4H802.5V759.4H803.0V759.4H803.5V766.2H804.0V766.2H804.5V766.2H805.0V761.0H805.5V761.0H806.0V761.0H806.5V761.0H807.0V744.4H807.5V744.4H808.0V744.4H808.5V770.9H809.0V770.9H809.5V770.9H810.0V745.4H810.5V745.4H811.0V745.4H811.5V754.0H812.0V754.0H812.5V754.0H813.0V754.0H813.5V774.5H814.0V774.5H814.5V769.5H815.0V769.5H815.5V775.2H816.0V775.2H816.5V775.2H817.0V775.2H817.5V775.3H818.0V775.3H818.5V775.3H819.0V775.3H819.5V775.3H820.0V775.1H820.5V775.1H821.0V775.1H821.5V775.0H822.0V775.0H822.5V775.0H823.0V775.6H823.5V775.6H824.0V775.6H824.5V775.0H825.0V775.0H825.5V774.9H826.0V774.9H826.5V775.0H827.0V775.0H827.5V775.0H828.0V774.8H828.5V774.8H829.0V774.8H829.5V775.7H830.0V775.7H830.5V775.4H831.0V775.4H831.5V775.4H832.0V775.4H832.5V774.9H833.0V774.9H833.5V775.1H834.0V775.1H834.5V775.2H835.0V775.2H835.5V775.3H836.0V775.3H836.5V775.3H837.0V775.1H837.5V775.1H838.0V775.1H838.5V775.7H839.0V775.7H839.5V775.7H840.0V775.4H840.5V775.4H841.0V775.4H841.5V775.1H842.0V775.1H842.5V775.1H843.0V775.2H843.5V775.2H844.0V775.2H844.5V775.2H845.0V775.0H845.5V775.0H846.0V775.0H846.4V656.1H846.0V656.1H845.5V656.1H845.0V656.0H844.5V656.0H844.0V656.0H843.5V656.0H843.0V655.3H842.5V655.3H842.0V655.3H841.5V655.7H841.0V655.7H840.5V655.7H840.0V655.3H839.5V655.3H839.0V655.3H838.5V656.2H838.0V656.2H837.5V656.2H837.0V656.2H836.5V655.7H836.0V655.7H835.5V656.0H835.0V656.0H834.5V656.0H834.0V656.0H833.5V656.0H833.0V656.0H832.5V655.8H832.0V655.8H831.5V655.8H831.0V655.8H830.5V655.6H830.0V655.6H829.5V655.6H829.0V655.6H828.5V659.3H828.0V659.3H827.5V659.3H827.0V656.1H826.5V656.1H826.0V655.8H825.5V655.8H825.0V655.8H824.5V656.1H824.0V656.1H823.5V655.4H823.0V655.4H822.5V655.4H822.0V656.0H821.5V656.0H821.0V656.0H820.5V656.0H820.0V656.0H819.5V656.0H819.0V655.6H818.5V655.6H818.0V655.6H817.5V655.4H817.0V655.4H816.5V655.4H816.0V655.4H815.5V678.2H815.0V678.2H814.5V675.4H814.0V675.4H813.5V670.5H813.0V670.5H812.5V670.4H812.0V670.4H811.5V670.4H811.0V669.7H810.5V669.7H810.0V669.7H809.5V678.0H809.0V678.0H808.5V678.0H808.0V667.1H807.5V667.1H807.0V667.1H806.5V674.6H806.0V674.6H805.5V658.1H805.0V658.1H804.5V668.7H804.0V668.7H803.5V671.0H803.0V671.0H802.5V677.3H802.0V677.3H801.5V677.3H801.0V668.6H800.5V668.6H800.0V668.6H799.5V674.7H799.0V674.7H798.5V674.7H798.0V677.1H797.5V677.1H797.0V677.1H796.5V656.3H796.0V656.3H795.5V682.3H795.0V682.3H794.5V682.3H794.0V663.0H793.5V663.0H793.0V663.0H792.5V663.0H792.0V655.3H791.5V655.3H791.0V655.3H790.5V659.2H790.0V659.2H789.5V660.1H789.0V660.1H788.5V660.1H788.0V660.1H787.5V656.4H787.0V656.4H786.5V656.4H786.0V660.8H785.5V660.8H785.0V660.0H784.5V660.0H784.0V660.0H783.5V665.5H783.0V665.5H782.5V658.0H782.0V658.0H781.5V658.0H781.0V658.0H780.5V658.0H780.0V658.0H779.5V663.5H779.0V663.5H778.5V663.5H778.0V661.9H777.5V661.9H777.0V661.9H776.5V661.9H776.0V657.9H775.5V657.9H775.0V658.8H774.5V658.8H774.0V658.8H773.5V656.6H773.0V656.6H772.5V656.6H772.0V665.4H771.5V665.4H771.0V655.3H770.5V655.3H770.0V655.3H769.5V659.8H769.0V659.8H768.5V659.8H768.0V659.8H767.5V656.4H767.0V656.4H766.5V656.4H766.0V662.9H765.5V662.9H765.0V662.9H764.5V657.8H764.0V657.8H763.5V657.6H763.0V657.6H762.5V657.1H762.0V657.1H761.5V674.0H761.0V674.0H760.5V674.0H760.0V655.9H759.5V655.9H759.0V655.9H758.5V655.3H758.0V655.3H757.5V666.6H757.0V666.6H756.5V666.6H756.0V655.3H755.5V655.3H755.0V655.3H754.5V662.6H754.0V662.6H753.5V662.6H753.0V662.6H752.5V673.4H752.0V673.4H751.5V673.4H751.0V686.9H750.5V686.9H750.0V686.9H749.5V655.5H749.0ZM849.8 528.3H850.3V528.3H850.8V527.9H851.3V527.9H851.8V527.9H852.3V527.8H852.8V527.8H853.3V527.8H853.8V528.3H854.3V528.3H854.8V528.3H855.3V528.3H855.8V527.8H856.3V527.8H856.8V527.8H857.3V527.8H857.8V528.0H858.3V528.0H858.8V528.0H859.3V528.0H859.8V527.7H860.3V527.7H860.8V527.7H861.3V527.8H861.8V527.8H862.3V527.8H862.8V527.8H863.3V527.8H863.8V528.3H864.3V528.3H864.8V528.3H865.3V528.3H865.8V527.7H866.3V527.7H866.8V527.8H867.3V527.8H867.8V527.8H868.3V528.1H868.8V528.1H869.3V528.1H869.8V528.2H870.3V528.2H870.8V528.2H871.3V528.2H871.8V528.3H872.3V528.3H872.8V528.0H873.3V528.0H873.8V528.0H874.3V528.0H874.8V527.7H875.3V527.7H875.8V527.7H876.3V553.3H876.8V553.3H877.3V553.3H877.8V527.6H878.3V527.6H878.8V544.8H879.3V544.8H879.8V544.8H880.3V544.8H880.8V527.6H881.3V527.6H881.8V537.1H882.3V537.1H882.8V537.1H883.3V537.1H883.8V539.1H884.3V539.1H884.8V539.1H885.3V544.7H885.8V544.7H886.3V527.9H886.8V527.9H887.3V541.7H887.8V541.7H888.3V541.7H888.8V529.0H889.3V529.0H889.8V553.7H890.3V553.7H890.8V553.7H891.3V553.7H891.8V548.9H892.3V548.9H892.8V534.4H893.3V534.4H893.8V534.4H894.3V527.8H894.8V527.8H895.3V527.8H895.8V528.3H896.3V528.3H896.8V528.3H897.3V527.8H897.8V527.8H898.3V527.8H898.8V527.8H899.3V528.1H899.8V528.1H900.3V528.1H900.8V527.9H901.3V527.9H901.8V527.9H902.3V527.9H902.8V527.8H903.3V527.8H903.8V527.8H904.3V527.8H904.8V527.8H905.3V527.8H905.8V538.0H906.3V538.0H906.8V538.0H907.3V528.2H907.8V528.2H908.3V528.2H908.8V528.3H909.3V528.3H909.8V528.3H910.3V527.9H910.8V527.9H911.3V527.9H911.8V527.9H912.3V527.9H912.8V527.9H913.3V527.9H913.8V535.7H914.3V535.7H914.8V573.7H915.3V573.7H915.8V560.5H916.3V560.5H916.8V560.5H917.3V566.0H917.8V566.0H918.3V566.0H918.8V564.0H919.3V564.0H919.8V564.0H920.3V545.2H920.8V545.2H921.3V545.2H921.8V529.9H922.3V529.9H922.8V529.9H923.3V529.9H923.8V550.4H924.3V550.4H924.8V550.4H925.3V553.7H925.8V553.7H926.3V546.2H926.8V546.2H927.3V546.2H927.8V552.2H928.3V552.2H928.8V539.0H929.3V539.0H929.8V539.0H930.3V527.8H930.8V527.8H931.3V528.1H931.8V528.1H932.3V528.1H932.8V528.1H933.3V528.5H933.8V528.5H934.3V528.5H934.8V528.5H935.3V527.6H935.8V527.6H936.3V527.6H936.8V527.8H937.3V527.8H937.8V527.8H938.3V527.8H938.8V528.4H939.3V528.4H939.8V528.3H940.3V528.3H940.8V527.7H941.3V527.7H941.8V527.7H942.3V528.4H942.8V528.4H943.3V528.4H943.8V528.3H944.3V528.3H944.8V528.3H945.3V528.3H945.8V528.1H946.3V528.1H946.8V528.4H947.3V528.4H947.8V528.4H948.3V527.7H948.8V527.7H949.3V527.7H949.8V527.7H950.3V528.1H950.8V528.1H951.3V528.1H951.8V527.8H952.3V527.8H952.8V528.4H953.3V528.4H953.8V528.4H954.3V527.8H954.8V527.8H955.3V528.0H955.8V528.0H956.3V528.3H956.8V528.3H957.3V528.3H957.8V528.1H958.3V528.1H958.8V528.1H959.3V548.1H959.8V548.1H960.3V548.1H960.8V546.6H961.3V546.6H961.8V546.6H962.3V528.8H962.8V528.8H963.3V528.8H963.8V553.0H964.3V553.0H964.8V553.0H965.3V556.7H965.8V556.7H966.3V556.7H966.8V556.7H967.3V556.2H967.8V556.2H968.3V556.2H968.8V556.2H969.3V560.2H969.8V560.2H970.3V560.2H970.8V560.2H971.3V570.8H971.8V570.8H972.3V574.6H972.8V629.1H972.3V614.4H971.8V614.4H971.3V617.4H970.8V617.4H970.3V617.4H969.8V616.9H969.3V616.9H968.8V616.9H968.3V620.2H967.8V620.2H967.3V620.2H966.8V620.2H966.3V625.8H965.8V625.8H965.3V618.5H964.8V618.5H964.3V629.5H963.8V629.5H963.3V629.5H962.8V622.0H962.3V622.0H961.8V622.0H961.3V622.0H960.8V633.2H960.3V633.2H959.8V633.2H959.3V633.2H958.8V647.8H958.3V647.8H957.8V647.8H957.3V648.0H956.8V648.0H956.3V648.0H955.8V648.0H955.3V648.1H954.8V648.1H954.3V648.1H953.8V648.1H953.3V648.5H952.8V648.5H952.3V648.5H951.8V647.8H951.3V647.8H950.8V647.9H950.3V647.9H949.8V647.9H949.3V648.1H948.8V648.1H948.3V648.2H947.8V648.2H947.3V648.2H946.8V648.2H946.3V648.2H945.8V648.6H945.3V648.6H944.8V648.5H944.3V648.5H943.8V648.1H943.3V648.1H942.8V648.3H942.3V648.3H941.8V648.3H941.3V648.0H940.8V648.0H940.3V648.0H939.8V648.0H939.3V648.1H938.8V648.1H938.3V648.1H937.8V648.1H937.3V648.3H936.8V648.3H936.3V648.3H935.8V648.0H935.3V648.0H934.8V648.0H934.3V648.5H933.8V648.5H933.3V648.3H932.8V648.3H932.3V648.3H931.8V648.1H931.3V648.1H930.8V648.1H930.3V632.9H929.8V632.9H929.3V632.9H928.8V632.9H928.3V627.2H927.8V627.2H927.3V627.2H926.8V612.0H926.3V612.0H925.8V612.0H925.3V612.0H924.8V646.0H924.3V646.0H923.8V646.0H923.3V643.8H922.8V643.8H922.3V634.0H921.8V634.0H921.3V634.0H920.8V634.0H920.3V609.8H919.8V609.8H919.3V609.8H918.8V609.8H918.3V605.4H917.8V605.4H917.3V605.4H916.8V612.9H916.3V612.9H915.8V612.5H915.3V612.5H914.8V612.5H914.3V648.0H913.8V648.0H913.3V648.0H912.8V648.0H912.3V648.0H911.8V648.0H911.3V647.9H910.8V647.9H910.3V647.9H909.8V647.9H909.3V648.5H908.8V648.5H908.3V647.9H907.8V647.9H907.3V648.2H906.8V648.2H906.3V648.2H905.8V648.2H905.3V648.2H904.8V648.2H904.3V647.7H903.8V647.7H903.3V647.7H902.8V648.4H902.3V648.4H901.8V648.4H901.3V648.4H900.8V648.4H900.3V648.0H899.8V648.0H899.3V648.0H898.8V647.8H898.3V647.8H897.8V647.8H897.3V647.8H896.8V647.8H896.3V648.4H895.8V648.4H895.3V648.4H894.8V643.7H894.3V643.7H893.8V643.7H893.3V635.6H892.8V635.6H892.3V635.6H891.8V627.4H891.3V627.4H890.8V627.4H890.3V626.7H889.8V626.7H889.3V626.7H888.8V630.1H888.3V630.1H887.8V630.1H887.3V630.1H886.8V631.6H886.3V631.6H885.8V631.6H885.3V631.6H884.8V622.7H884.3V622.7H883.8V622.7H883.3V630.1H882.8V630.1H882.3V626.1H881.8V626.1H881.3V626.1H880.8V625.6H880.3V625.6H879.8V632.2H879.3V632.2H878.8V632.2H878.3V632.2H877.8V622.8H877.3V622.8H876.8V622.8H876.3V633.0H875.8V633.0H875.3V648.2H874.8V648.2H874.3V648.5H873.8V648.5H873.3V648.4H872.8V648.4H872.3V647.9H871.8V647.9H871.3V647.7H870.8V647.7H870.3V648.5H869.8V648.5H869.3V647.9H868.8V647.9H868.3V647.9H867.8V648.0H867.3V648.0H866.8V648.1H866.3V648.1H865.8V648.1H865.3V648.4H864.8V648.4H864.3V648.4H863.8V648.5H863.3V648.5H862.8V648.5H862.3V648.5H861.8V648.5H861.3V648.5H860.8V648.5H860.3V648.3H859.8V648.3H859.3V647.8H858.8V647.8H858.3V647.8H857.8V648.4H857.3V648.4H856.8V647.9H856.3V647.9H855.8V647.7H855.3V647.7H854.8V647.7H854.3V647.7H853.8V648.2H853.3V648.2H852.8V648.2H852.3V648.2H851.8V648.1H851.3V648.1H850.8V648.1H850.3V648.1H849.8ZM849.8 729.0H850.3V729.0H850.8V729.0H851.3V775.0H851.8V775.0H852.3V774.9H852.8V774.9H853.3V774.9H853.8V774.9H854.3V775.3H854.8V775.3H855.3V775.3H855.8V775.0H856.3V775.0H856.8V775.0H857.3V775.0H857.8V775.1H858.3V775.1H858.8V775.1H859.3V775.7H859.8V775.7H860.3V775.4H860.8V775.4H861.3V775.4H861.8V775.5H862.3V775.5H862.8V775.5H863.3V775.7H863.8V775.7H864.3V775.5H864.8V775.5H865.3V775.5H865.8V775.1H866.3V775.1H866.8V775.0H867.3V775.0H867.8V775.0H868.3V775.2H868.8V775.2H869.3V775.2H869.8V774.9H870.3V774.9H870.8V775.4H871.3V775.4H871.8V775.4H872.3V775.5H872.8V775.5H873.3V775.6H873.8V775.6H874.3V775.6H874.8V775.6H875.3V775.7H875.8V775.7H876.3V775.7H876.8V775.7H877.3V757.8H877.8V757.8H878.3V773.5H878.8V773.5H879.3V765.7H879.8V765.7H880.3V760.4H880.8V760.4H881.3V770.8H881.8V770.8H882.3V743.3H882.8V743.3H883.3V770.4H883.8V770.4H884.3V762.2H884.8V762.2H885.3V752.0H885.8V752.0H886.3V751.1H886.8V751.1H887.3V751.1H887.8V751.1H888.3V756.4H888.8V756.4H889.3V775.7H889.8V775.7H890.3V775.7H890.8V775.7H891.3V775.7H891.8V775.7H892.3V774.9H892.8V774.9H893.3V774.5H893.8V774.5H894.3V774.5H894.8V774.5H895.3V774.9H895.8V774.9H896.3V775.0H896.8V775.0H897.3V775.0H897.8V775.7H898.3V775.7H898.8V775.7H899.3V775.6H899.8V775.6H900.3V775.6H900.8V775.2H901.3V775.2H901.8V775.2H902.3V775.2H902.8V775.0H903.3V775.0H903.8V775.0H904.3V775.6H904.8V775.6H905.3V775.6H905.8V774.9H906.3V774.9H906.8V775.0H907.3V775.0H907.8V775.0H908.3V775.0H908.8V775.3H909.3V775.3H909.8V775.3H910.3V775.0H910.8V775.0H911.3V775.0H911.8V775.5H912.3V775.5H912.8V775.5H913.3V775.3H913.8V775.3H914.3V775.3H914.8V746.4H915.3V746.4H915.8V746.4H916.3V738.8H916.8V738.8H917.3V739.9H917.8V739.9H918.3V750.7H918.8V750.7H919.3V750.7H919.8V739.7H920.3V739.7H920.8V739.7H921.3V739.7H921.8V770.5H922.3V770.5H922.8V775.7H923.3V775.7H923.8V775.7H924.3V747.8H924.8V747.8H925.3V747.8H925.8V750.9H926.3V750.9H926.8V750.9H927.3V750.9H927.8V752.5H928.3V752.5H928.8V752.5H929.3V752.5H929.8V767.5H930.3V767.5H930.8V767.5H931.3V775.7H931.8V775.7H932.3V775.7H932.8V774.9H933.3V774.9H933.8V774.9H934.3V774.9H934.8V775.5H935.3V775.5H935.8V775.3H936.3V775.3H936.8V775.3H937.3V775.3H937.8V775.1H938.3V775.1H938.8V775.1H939.3V775.7H939.8V775.7H940.3V775.3H940.8V775.3H941.3V774.9H941.8V774.9H942.3V774.9H942.8V775.4H943.3V775.4H943.8V775.1H944.3V775.1H944.8V774.8H945.3V774.8H945.8V774.8H946.3V774.8H946.8V775.4H947.3V775.4H947.8V775.4H948.3V775.3H948.8V775.3H949.3V775.3H949.8V775.0H950.3V775.0H950.8V775.0H951.3V775.0H951.8V775.0H952.3V775.1H952.8V775.1H953.3V775.4H953.8V775.4H954.3V775.3H954.8V775.3H955.3V775.3H955.8V775.4H956.3V775.4H956.8V775.4H957.3V775.4H957.8V775.4H958.3V775.4H958.8V775.4H959.3V775.4H959.8V758.6H960.3V758.6H960.8V756.7H961.3V756.7H961.8V756.7H962.3V756.7H962.8V764.1H963.3V764.1H963.8V764.1H964.3V743.9H964.8V743.9H965.3V743.9H965.8V746.2H966.3V746.2H966.8V746.2H967.3V746.2H967.8V766.3H968.3V766.3H968.8V766.3H969.3V766.3H969.8V737.8H970.3V737.8H970.8V737.8H971.3V730.4H971.8V730.4H972.3V730.4H972.8V696.4H972.3V696.4H971.8V694.6H971.3V694.6H970.8V700.5H970.3V700.5H969.8V699.2H969.3V699.2H968.8V686.2H968.3V686.2H967.8V686.2H967.3V686.2H966.8V680.1H966.3V680.1H965.8V680.1H965.3V683.9H964.8V683.9H964.3V683.9H963.8V676.9H963.3V676.9H962.8V681.4H962.3V681.4H961.8V681.4H961.3V669.5H960.8V669.5H960.3V655.8H959.8V655.8H959.3V655.8H958.8V655.8H958.3V655.7H957.8V655.7H957.3V655.7H956.8V655.7H956.3V655.4H955.8V655.4H955.3V655.4H954.8V655.4H954.3V655.9H953.8V655.9H953.3V655.9H952.8V655.6H952.3V655.6H951.8V655.6H951.3V655.6H950.8V655.6H950.3V655.4H949.8V655.4H949.3V655.4H948.8V655.7H948.3V655.7H947.8V655.9H947.3V655.9H946.8V655.9H946.3V655.8H945.8V655.8H945.3V655.3H944.8V655.3H944.3V655.4H943.8V655.4H943.3V655.4H942.8V655.4H942.3V655.4H941.8V655.4H941.3V655.4H940.8V655.4H940.3V655.4H939.8V655.5H939.3V655.5H938.8V655.6H938.3V655.6H937.8V655.6H937.3V655.6H936.8V655.7H936.3V655.7H935.8V655.7H935.3V655.7H934.8V655.7H934.3V655.7H933.8V655.7H933.3V655.5H932.8V655.5H932.3V655.7H931.8V655.7H931.3V655.7H930.8V655.7H930.3V695.0H929.8V695.0H929.3V695.0H928.8V695.0H928.3V672.4H927.8V672.4H927.3V672.4H926.8V676.8H926.3V676.8H925.8V685.4H925.3V685.4H924.8V685.4H924.3V672.0H923.8V672.0H923.3V656.2H922.8V656.2H922.3V656.2H921.8V670.0H921.3V670.0H920.8V670.0H920.3V705.5H919.8V705.5H919.3V705.5H918.8V688.2H918.3V688.2H917.8V690.6H917.3V690.6H916.8V702.8H916.3V702.8H915.8V702.8H915.3V702.8H914.8V655.5H914.3V655.5H913.8V655.5H913.3V655.5H912.8V655.5H912.3V655.5H911.8V656.0H911.3V656.0H910.8V656.0H910.3V656.1H909.8V656.1H909.3V656.1H908.8V656.1H908.3V656.0H907.8V656.0H907.3V655.3H906.8V655.3H906.3V656.0H905.8V656.0H905.3V655.6H904.8V655.6H904.3V655.6H903.8V655.4H903.3V655.4H902.8V655.4H902.3V655.4H901.8V655.8H901.3V655.8H900.8V655.8H900.3V655.8H899.8V655.5H899.3V655.5H898.8V655.4H898.3V655.4H897.8V655.4H897.3V656.0H896.8V656.0H896.3V656.0H895.8V656.0H895.3V655.8H894.8V655.8H894.3V655.8H893.8V678.0H893.3V678.0H892.8V678.0H892.3V668.9H891.8V668.9H891.3V670.6H890.8V670.6H890.3V670.6H889.8V670.9H889.3V670.9H888.8V670.9H888.3V670.9H887.8V669.8H887.3V669.8H886.8V678.5H886.3V678.5H885.8V675.8H885.3V675.8H884.8V675.8H884.3V674.2H883.8V674.2H883.3V674.2H882.8V670.2H882.3V670.2H881.8V670.2H881.3V673.9H880.8V673.9H880.3V674.3H879.8V674.3H879.3V674.3H878.8V675.9H878.3V675.9H877.8V687.5H877.3V687.5H876.8V687.5H876.3V655.5H875.8V655.5H875.3V655.5H874.8V655.5H874.3V655.4H873.8V655.4H873.3V655.4H872.8V655.5H872.3V655.5H871.8V655.5H871.3V655.8H870.8V655.8H870.3V655.8H869.8V655.4H869.3V655.4H868.8V655.5H868.3V655.5H867.8V655.3H867.3V655.3H866.8V655.8H866.3V655.8H865.8V655.8H865.3V655.6H864.8V655.6H864.3V656.2H863.8V656.2H863.3V656.2H862.8V655.9H862.3V655.9H861.8V655.4H861.3V655.4H860.8V656.0H860.3V656.0H859.8V655.4H859.3V655.4H858.8V655.4H858.3V655.4H857.8V655.5H857.3V655.5H856.8V655.6H856.3V655.6H855.8V655.6H855.3V664.6H854.8V664.6H854.3V664.6H853.8V655.5H853.3V655.5H852.8V655.5H852.3V655.5H851.8V656.0H851.3V656.0H850.8V674.7H850.3V674.7H849.8Z"/>
<path fill="#8e8e8e" d="M6.8 764.5L17.3 775V785H6.8Z"/>
<text x="9.8" y="783.5" font-family="Liberation Sans" font-size="9.5" font-weight="bold" fill="#fff">1</text>
<path fill="#8e8e8e" d="M92.8 764.5L103.3 775V785H92.8Z"/>
<text x="95.8" y="783.5" font-family="Liberation Sans" font-size="9.5" font-weight="bold" fill="#fff">1</text>
<path fill="#8e8e8e" d="M200.2 764.5L210.7 775V785H200.2Z"/>
<text x="203.2" y="783.5" font-family="Liberation Sans" font-size="9.5" font-weight="bold" fill="#fff">1</text>
<path fill="#8e8e8e" d="M270.1 764.5L280.6 775V785H270.1Z"/>
<text x="273.1" y="783.5" font-family="Liberation Sans" font-size="9.5" font-weight="bold" fill="#fff">1</text>
<path fill="#8e8e8e" d="M379.3 764.5L389.8 775V785H379.3Z"/>
<text x="382.3" y="783.5" font-family="Liberation Sans" font-size="9.5" font-weight="bold" fill="#fff">1</text>
<path fill="#8e8e8e" d="M507.7 764.5L518.2 775V785H507.7Z"/>
<text x="510.7" y="783.5" font-family="Liberation Sans" font-size="9.5" font-weight="bold" fill="#fff">1</text>
<path fill="#8e8e8e" d="M590.9 764.5L601.4 775V785H590.9Z"/>
<text x="593.9" y="783.5" font-family="Liberation Sans" font-size="9.5" font-weight="bold" fill="#fff">1</text>
<path fill="#8e8e8e" d="M748.5 764.5L759.0 775V785H748.5Z"/>
<text x="751.5" y="783.5" font-family="Liberation Sans" font-size="9.5" font-weight="bold" fill="#fff">1</text>
<path fill="#8e8e8e" d="M849.3 764.5L859.8 775V785H849.3Z"/>
<text x="852.3" y="783.5" font-family="Liberation Sans" font-size="9.5" font-weight="bold" fill="#fff">1</text>
<rect x="506.6" y="518" width="1.4" height="267" fill="#d2334a"/>
</svg>
  <!--RIGHT-->
<div class="rpanel"></div>
<span class="lbl" style="left:985px;width:62.5px;top:81.5px">Title</span>
<span class="lbl" style="left:965px;width:82.5px;top:113.5px">Performer</span>
<span class="lbl" style="left:985px;width:62.5px;top:145.5px">MCN</span>
<div class="fld" style="top:77px"><span>Fire Burning</span></div>
<div class="fld" style="top:109px"><span>Hot Shots</span></div>
<div class="fld" style="top:141px"><span>0813285908925</span></div>
<div class="btn">Show CD Text</div>
<span class="abs" style="left:1022px;top:210px;font-size:14px;letter-spacing:0.15px;color:#4a4a4a">Total Length</span>
<span class="abs" style="left:1112px;top:210px;font-size:14px;letter-spacing:-0.3px;color:#4a4a4a">51:56:67</span>
<svg class="abs" style="left:1000px;top:250px" width="200" height="50" viewBox="1000 250 200 50">
  <path fill="#545454" d="M1018 275L1031 268.5V281.5Z M1030 275L1042.5 268.5V281.5Z"/>
  <rect x="1059" y="262.3" width="5.3" height="25.5" fill="#545454"/>
  <rect x="1068.8" y="262.3" width="5.3" height="25.5" fill="#545454"/>
  <path fill="#545454" d="M1115 275L1102.5 268.5V281.5Z M1103 275L1090.5 268.5V281.5Z"/>
  <path fill="none" stroke="#7c7c7c" stroke-width="1.6" d="M1145.2 263.4H1154.2V268 M1145.2 287H1154.2V282.5 M1171 263.4H1162.3V287H1171"/>
  <path fill="#cc0d14" d="M1151 267.5L1165.2 275L1151 282.5Z"/>
</svg>
<svg class="abs" style="left:1060px;top:315px" width="60" height="470" viewBox="1060 315 60 470">
<defs>
<linearGradient id="mi" x1="0" y1="348" x2="0" y2="444" gradientUnits="userSpaceOnUse">
<stop offset="0" stop-color="#7f171b"/><stop offset="0.26" stop-color="#7e1d1c"/><stop offset="0.45" stop-color="#7b4a22"/><stop offset="0.6" stop-color="#7a7026"/><stop offset="1" stop-color="#7a7a28"/></linearGradient>
<linearGradient id="ma" x1="0" y1="441" x2="0" y2="763" gradientUnits="userSpaceOnUse">
<stop offset="0" stop-color="#bcd83c"/><stop offset="0.08" stop-color="#92d63a"/><stop offset="0.16" stop-color="#45d23c"/><stop offset="1" stop-color="#34d43a"/></linearGradient>
</defs>
<rect x="1087" y="321" width="6.2" height="21" fill="#891a1d"/>
<rect x="1098.8" y="321" width="6.2" height="21" fill="#891a1d"/>
<rect x="1087" y="348" width="6.2" height="93" fill="url(#mi)"/>
<rect x="1098.8" y="348" width="6.2" height="96" fill="url(#mi)"/>
<rect x="1087" y="441" width="6.2" height="322.4" fill="url(#ma)"/>
<rect x="1098.8" y="444" width="6.2" height="319.4" fill="url(#ma)"/>
<g font-family="Liberation Sans" font-size="11" fill="#555" text-anchor="end">
<text x="1081.5" y="352">0</text>
<text x="1081.5" y="489">-20</text>
<text x="1081.5" y="630">-40</text>
<text x="1081.5" y="768">-60</text>
</g>
<g font-family="Liberation Sans" font-size="11" fill="#555">
<text x="1087.5" y="777">L</text>
<text x="1098.5" y="777">R</text>
</g>
</svg>

  <!--BOTTOM-->
<div class="abs" style="left:17px;top:815.7px;width:509px;height:7px;border-radius:3.5px;background:#fff"></div>
<div class="abs" style="left:26.6px;top:813.7px;width:10.6px;height:10.6px;border-radius:50%;background:radial-gradient(circle at 50% 35%,#5a8fe6,#3169d3)"></div>
<div class="abs" style="left:544.3px;top:797px;width:125.2px;height:44.4px;border-radius:4px;background:#fff"></div>
<span class="abs" style="left:562.5px;top:799px;font-size:36.5px;letter-spacing:-0.5px;color:#4a4a4a">00:06</span>
<span class="abs" style="left:17px;top:854.5px;font-size:14px;color:#4a4a4a">Registered to Pieter Stenekes - Sonoris Audio Engineering</span>
<div class="frame"></div>
</div>
</body></html>
